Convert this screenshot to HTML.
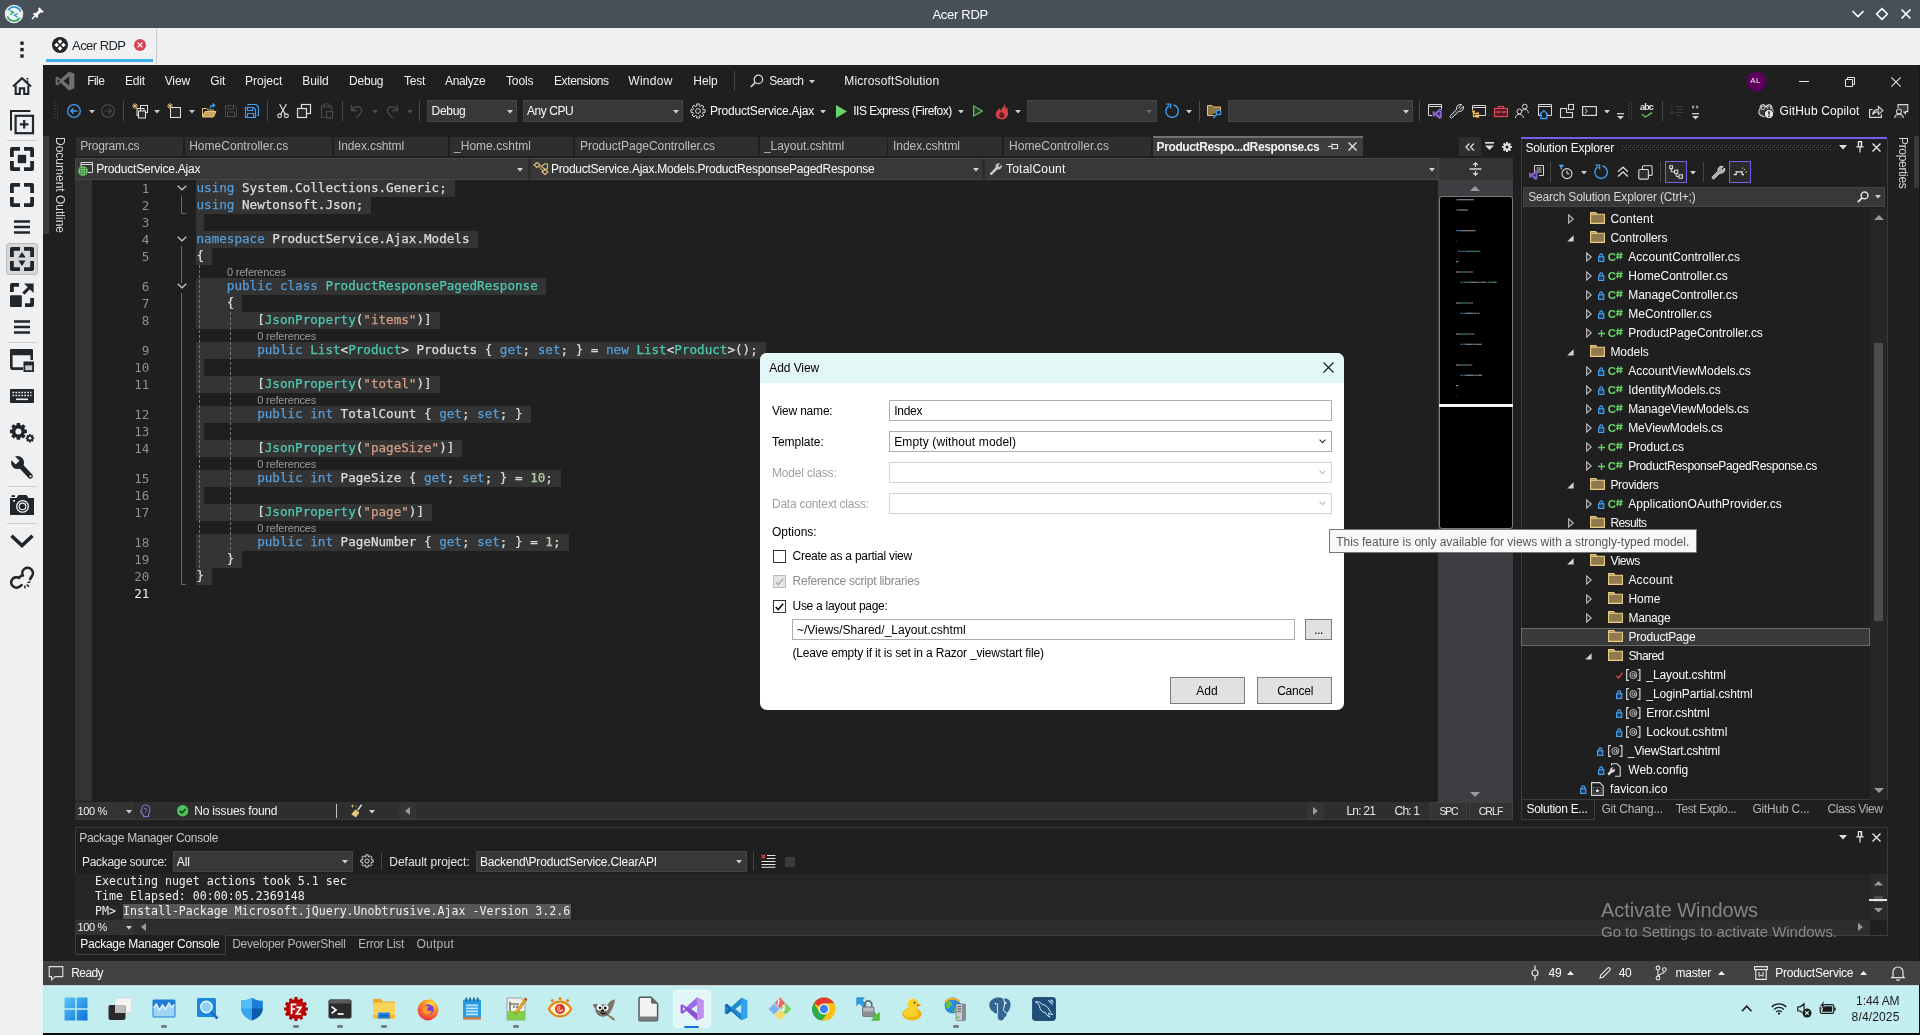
<!DOCTYPE html>
<html lang="en"><head><meta charset="utf-8"><title>Acer RDP</title>
<style>
html,body{margin:0;padding:0}
body{width:1920px;height:1035px;overflow:hidden;position:relative;background:#1f1f1f;font-family:"Liberation Sans",sans-serif;font-size:12px;color:#fff}
div,svg{box-sizing:border-box}
svg{overflow:visible}
#root{position:absolute;left:0;top:0;width:1920px;height:1035px;will-change:transform}
</style></head><body><div id="root">
<!-- p1_chrome -->
<div style="position:absolute;left:0px;top:0px;width:1920px;height:28px;background:#475059;"></div>
<div style="position:absolute;left:932.5px;top:5.5px;line-height:17px;font-size:13px;color:#fcfcfc;white-space:pre;letter-spacing:-0.299px;">Acer RDP</div>
<svg style="position:absolute;left:4px;top:4px;" width="20" height="20" viewBox="0 0 20 20"><circle cx="10" cy="10" r="9.3" fill="#e3e6e8"/><circle cx="10" cy="10" r="7.2" fill="#f4f5f6"/><path d="M4.2 6.2A7 7 0 0 1 16.6 7.6" fill="none" stroke="#2a8fd6" stroke-width="1.6"/><path d="M15.8 13.8A7 7 0 0 1 3.4 12.4" fill="none" stroke="#2fae62" stroke-width="1.6"/><path d="M6.2 6.6L9.6 8.6L6.2 10.6" fill="none" stroke="#2fae62" stroke-width="1.3"/><path d="M13.6 9.2L10.4 11.2L13.6 13.2" fill="none" stroke="#2a8fd6" stroke-width="1.3"/></svg>
<svg style="position:absolute;left:31px;top:6px;" width="14" height="14" viewBox="0 0 14 14"><path d="M8.2 1.2L12.8 5.8L11.6 6.6L9.6 6.4L6.9 9.1L7 11.2L5.9 12.1L1.9 8.1L2.8 7L4.9 7.1L7.6 4.4L7.4 2.4Z" fill="#fff"/><path d="M4 10L1 13" stroke="#fff" stroke-width="1.4"/></svg>
<svg style="position:absolute;left:1851px;top:9px;" width="14" height="10" viewBox="0 0 14 10"><path d="M1.5 2L7 7.5L12.5 2" fill="none" stroke="#fff" stroke-width="1.6"/></svg>
<svg style="position:absolute;left:1875px;top:7px;" width="14" height="14" viewBox="0 0 14 14"><path d="M7 1.6L12.4 7L7 12.4L1.6 7Z" fill="none" stroke="#fff" stroke-width="1.5"/></svg>
<svg style="position:absolute;left:1900px;top:8px;" width="12" height="12" viewBox="0 0 12 12"><path d="M1.5 1.5L10.5 10.5M10.5 1.5L1.5 10.5" stroke="#fff" stroke-width="1.6"/></svg>
<div style="position:absolute;left:0px;top:28px;width:1920px;height:37px;background:#eff0f1;"></div>
<div style="position:absolute;left:0px;top:28px;width:43px;height:1007px;background:#eff0f1;"></div>
<div style="position:absolute;left:46px;top:59px;width:107px;height:3px;background:#3daee9;"></div>
<div style="position:absolute;left:156px;top:29px;width:1px;height:35px;background:#c9cacc;"></div>
<svg style="position:absolute;left:52px;top:37px;" width="16" height="16" viewBox="0 0 16 16"><circle cx="8" cy="8" r="8" fill="#232629"/><path d="M8 2.3L10.3 4.6L8 6.9L5.7 4.6Z M8 9.1L10.3 11.4L8 13.7L5.7 11.4Z M4.6 5.7L6.9 8L4.6 10.3L2.3 8Z M11.4 5.7L13.7 8L11.4 10.3L9.1 8Z" fill="#fff"/></svg>
<div style="position:absolute;left:72.0px;top:36.5px;line-height:17px;font-size:13px;color:#232629;white-space:pre;letter-spacing:-0.536px;">Acer RDP</div>
<svg style="position:absolute;left:134px;top:39px;" width="12" height="12" viewBox="0 0 12 12"><circle cx="6" cy="6" r="6" fill="#da4453"/><path d="M3.6 3.6L8.4 8.4M8.4 3.6L3.6 8.4" stroke="#fff" stroke-width="1.3"/></svg>
<svg style="position:absolute;left:20px;top:41px;" width="4" height="17" viewBox="0 0 4 17"><rect x="0.3" y="0.5" width="3.4" height="3.4" fill="#232629"/><rect x="0.3" y="6.9" width="3.4" height="3.4" fill="#232629"/><rect x="0.3" y="13.3" width="3.4" height="3.4" fill="#232629"/></svg>
<svg style="position:absolute;left:12px;top:76px;" width="20" height="20" viewBox="0 0 20 20"><path d="M1 10.6L10 2.2L19 10.6" fill="none" stroke="#232629" stroke-width="2.1"/><path d="M3.7 9.4V18H7.8V12.4H12.2V18H16.3V9.4" fill="none" stroke="#232629" stroke-width="2.1"/><path d="M15.4 2V3.4M15.4 4.4V6.4" stroke="#232629" stroke-width="1.9"/></svg>
<svg style="position:absolute;left:10px;top:110px;" width="24" height="24" viewBox="0 0 24 24"><path d="M1 20.6V1H20.4" fill="none" stroke="#232629" stroke-width="2"/><rect x="5.6" y="5.8" width="17.4" height="17.4" fill="none" stroke="#232629" stroke-width="2.2"/><path d="M14.2 10V18.6M9.9 14.3H18.5" stroke="#232629" stroke-width="2.2"/></svg>
<div style="position:absolute;left:7px;top:140px;width:30px;height:1px;background:#cdcfd1;"></div>
<svg style="position:absolute;left:10px;top:147px;" width="24" height="24" viewBox="0 0 24 24"><path d="M1.9 10V1.9H10 M14 1.9H22.1V10 M22.1 14V22.1H14 M10 22.1H1.9V14" fill="none" stroke="#232629" stroke-width="3.8" stroke-linejoin="round"/><rect x="7.8" y="7.8" width="8.4" height="8.4" fill="#232629"/></svg>
<svg style="position:absolute;left:10px;top:183px;" width="24" height="24" viewBox="0 0 24 24"><path d="M1.9 10V1.9H10 M14 1.9H22.1V10 M22.1 14V22.1H14 M10 22.1H1.9V14" fill="none" stroke="#232629" stroke-width="3.8" stroke-linejoin="round"/></svg>
<svg style="position:absolute;left:14px;top:220px;" width="16" height="14" viewBox="0 0 16 14"><path d="M0 1.5H16M0 7H16M0 12.5H16" stroke="#232629" stroke-width="2.4"/></svg>
<div style="position:absolute;left:6px;top:243px;width:32px;height:32px;background:#d6d8da;border:1px solid #b9bbbd;box-sizing:border-box;border-radius:3px;"></div>
<svg style="position:absolute;left:10px;top:247px;" width="24" height="24" viewBox="0 0 24 24"><path d="M1.9 10V1.9H10 M14 1.9H22.1V10 M22.1 14V22.1H14 M10 22.1H1.9V14" fill="none" stroke="#232629" stroke-width="3.8" stroke-linejoin="round"/><path d="M12 5L15.6 10.4H8.4Z M12 19L15.6 13.6H8.4Z" fill="#232629"/></svg>
<svg style="position:absolute;left:10px;top:283px;" width="24" height="24" viewBox="0 0 24 24"><path d="M1.9 9V1.9H9 M22.1 15V22.1H15" fill="none" stroke="#232629" stroke-width="3.8" stroke-linejoin="round"/><rect x="0" y="12.2" width="11.8" height="11.8" rx="1" fill="#232629"/><path d="M13.4 10.6L20 4" stroke="#232629" stroke-width="3"/><path d="M14 0.4H23.6V10Z" fill="#232629"/></svg>
<svg style="position:absolute;left:14px;top:320px;" width="16" height="14" viewBox="0 0 16 14"><path d="M0 1.5H16M0 7H16M0 12.5H16" stroke="#232629" stroke-width="2.4"/></svg>
<div style="position:absolute;left:7px;top:342px;width:30px;height:1px;background:#cdcfd1;"></div>
<svg style="position:absolute;left:10px;top:349px;" width="24" height="24" viewBox="0 0 24 24"><path d="M13 19.6H2.6A1.3 1.3 0 0 1 1.3 18.3V2.6A1.3 1.3 0 0 1 2.6 1.3H20.4A1.3 1.3 0 0 1 21.7 2.6V11" fill="none" stroke="#232629" stroke-width="2.6"/><rect x="0" y="0" width="23" height="6.2" rx="1.3" fill="#232629"/><rect x="13.5" y="12.5" width="10.5" height="10.5" fill="#232629"/><rect x="15.2" y="16.4" width="7" height="4.8" fill="#c9cbcd"/></svg>
<svg style="position:absolute;left:10px;top:389px;" width="24" height="14" viewBox="0 0 24 14"><rect x="0" y="0" width="24" height="14" rx="1" fill="#232629"/><path d="M2.5 3.5H21.5M2.5 6.5H21.5" stroke="#eff0f1" stroke-width="1.6" stroke-dasharray="1.7 1.25"/><path d="M6 10.3H18" stroke="#eff0f1" stroke-width="1.6"/></svg>
<svg style="position:absolute;left:10px;top:420px;" width="24" height="24" viewBox="0 0 24 24"><circle cx="8.4" cy="11.4" r="6.6" fill="#232629"/><rect x="6.60" y="2.93" width="3.6" height="3.4" rx="0.5" transform="rotate(0.0 8.4 11.4)" fill="#232629"/><rect x="6.60" y="2.93" width="3.6" height="3.4" rx="0.5" transform="rotate(45.0 8.4 11.4)" fill="#232629"/><rect x="6.60" y="2.93" width="3.6" height="3.4" rx="0.5" transform="rotate(90.0 8.4 11.4)" fill="#232629"/><rect x="6.60" y="2.93" width="3.6" height="3.4" rx="0.5" transform="rotate(135.0 8.4 11.4)" fill="#232629"/><rect x="6.60" y="2.93" width="3.6" height="3.4" rx="0.5" transform="rotate(180.0 8.4 11.4)" fill="#232629"/><rect x="6.60" y="2.93" width="3.6" height="3.4" rx="0.5" transform="rotate(225.0 8.4 11.4)" fill="#232629"/><rect x="6.60" y="2.93" width="3.6" height="3.4" rx="0.5" transform="rotate(270.0 8.4 11.4)" fill="#232629"/><rect x="6.60" y="2.93" width="3.6" height="3.4" rx="0.5" transform="rotate(315.0 8.4 11.4)" fill="#232629"/><circle cx="8.4" cy="11.4" r="3.0" fill="#eff0f1"/><circle cx="20" cy="18.2" r="3.2" fill="#232629"/><rect x="19.05" y="13.96" width="1.9" height="1.9" rx="0.5" transform="rotate(0.0 20 18.2)" fill="#232629"/><rect x="19.05" y="13.96" width="1.9" height="1.9" rx="0.5" transform="rotate(45.0 20 18.2)" fill="#232629"/><rect x="19.05" y="13.96" width="1.9" height="1.9" rx="0.5" transform="rotate(90.0 20 18.2)" fill="#232629"/><rect x="19.05" y="13.96" width="1.9" height="1.9" rx="0.5" transform="rotate(135.0 20 18.2)" fill="#232629"/><rect x="19.05" y="13.96" width="1.9" height="1.9" rx="0.5" transform="rotate(180.0 20 18.2)" fill="#232629"/><rect x="19.05" y="13.96" width="1.9" height="1.9" rx="0.5" transform="rotate(225.0 20 18.2)" fill="#232629"/><rect x="19.05" y="13.96" width="1.9" height="1.9" rx="0.5" transform="rotate(270.0 20 18.2)" fill="#232629"/><rect x="19.05" y="13.96" width="1.9" height="1.9" rx="0.5" transform="rotate(315.0 20 18.2)" fill="#232629"/><circle cx="20" cy="18.2" r="1.4" fill="#eff0f1"/></svg>
<svg style="position:absolute;left:10px;top:456px;" width="24" height="24" viewBox="0 0 24 24"><path d="M8.5 7.5L20.4 20.2" stroke="#232629" stroke-width="5" stroke-linecap="round"/><circle cx="7.6" cy="6.6" r="6.5" fill="#232629"/><rect x="-2.6" y="-8" width="5.2" height="8.6" transform="translate(7.2 6.2) rotate(-45)" fill="#eff0f1"/><circle cx="20.5" cy="20.3" r="1.1" fill="#eff0f1"/></svg>
<div style="position:absolute;left:7px;top:486px;width:30px;height:1px;background:#cdcfd1;"></div>
<svg style="position:absolute;left:10px;top:494px;" width="24" height="22" viewBox="0 0 24 22"><path d="M0 4H6.5L8.5 1H16.5L18.5 4H24V21H0Z" fill="#232629"/><rect x="1.5" y="1.2" width="3.5" height="1.8" fill="#232629"/><circle cx="12.5" cy="12.4" r="5.8" fill="none" stroke="#eff0f1" stroke-width="1.3"/><circle cx="12.5" cy="12.4" r="3.3" fill="none" stroke="#eff0f1" stroke-width="1.2"/><rect x="3" y="6" width="2" height="1.6" fill="#eff0f1"/></svg>
<div style="position:absolute;left:7px;top:523px;width:30px;height:1px;background:#cdcfd1;"></div>
<svg style="position:absolute;left:10px;top:534px;" width="24" height="14" viewBox="0 0 24 14"><path d="M1.5 1.8L12 11.6L22.5 1.8" fill="none" stroke="#232629" stroke-width="3.6"/></svg>
<svg style="position:absolute;left:10px;top:566px;" width="24" height="24" viewBox="0 0 24 24"><path d="M12.9 9.6A5.3 5.3 0 1 1 21.6 10.6L20.2 13.2" fill="none" stroke="#232629" stroke-width="2.6" stroke-linecap="round"/><path d="M11 9.9L9 11.9A5.2 5.2 0 1 0 9.7 20.5L11.6 19.2" fill="none" stroke="#232629" stroke-width="2.6" stroke-linecap="round"/><path d="M17.4 16.6L20.4 15.8M16.6 18.6L19 20.6M14.6 19.6L15.2 22.4" stroke="#232629" stroke-width="1.5"/></svg>
<!-- p2_vstop -->
<div style="position:absolute;left:43px;top:65px;width:1877px;height:920px;background:#1f1f1f;"></div>
<svg style="position:absolute;left:55px;top:71px;" width="20" height="20" viewBox="0 0 20 20"><path d="M14 0.6L19.4 2.8V17.2L14 19.4L5.6 11.8L2.4 14.4L0.6 13.4V6.6L2.4 5.6L5.6 8.2Z M14.2 5.6L8.6 10L14.2 14.4Z M2.6 7.8V12.2L5 10Z" fill="#6f6f6f" fill-rule="evenodd"/></svg>
<div style="position:absolute;left:87.3px;top:73.0px;line-height:16px;color:#f0f0f0;white-space:pre;letter-spacing:-0.584px;">File</div>
<div style="position:absolute;left:125.0px;top:73.0px;line-height:16px;color:#f0f0f0;white-space:pre;letter-spacing:-0.169px;">Edit</div>
<div style="position:absolute;left:164.7px;top:73.0px;line-height:16px;color:#f0f0f0;white-space:pre;letter-spacing:-0.123px;">View</div>
<div style="position:absolute;left:210.3px;top:73.0px;line-height:16px;color:#f0f0f0;white-space:pre;letter-spacing:-0.111px;">Git</div>
<div style="position:absolute;left:245.0px;top:73.0px;line-height:16px;color:#f0f0f0;white-space:pre;letter-spacing:-0.007px;">Project</div>
<div style="position:absolute;left:302.3px;top:73.0px;line-height:16px;color:#f0f0f0;white-space:pre;letter-spacing:-0.057px;">Build</div>
<div style="position:absolute;left:349.0px;top:73.0px;line-height:16px;color:#f0f0f0;white-space:pre;letter-spacing:-0.212px;">Debug</div>
<div style="position:absolute;left:404.0px;top:73.0px;line-height:16px;color:#f0f0f0;white-space:pre;letter-spacing:-0.252px;">Test</div>
<div style="position:absolute;left:445.0px;top:73.0px;line-height:16px;color:#f0f0f0;white-space:pre;letter-spacing:-0.341px;">Analyze</div>
<div style="position:absolute;left:506.0px;top:73.0px;line-height:16px;color:#f0f0f0;white-space:pre;letter-spacing:-0.142px;">Tools</div>
<div style="position:absolute;left:554.0px;top:73.0px;line-height:16px;color:#f0f0f0;white-space:pre;letter-spacing:-0.400px;">Extensions</div>
<div style="position:absolute;left:628.3px;top:73.0px;line-height:16px;color:#f0f0f0;white-space:pre;letter-spacing:0.287px;">Window</div>
<div style="position:absolute;left:693.3px;top:73.0px;line-height:16px;color:#f0f0f0;white-space:pre;letter-spacing:-0.070px;">Help</div>
<div style="position:absolute;left:734px;top:71px;width:1px;height:20px;background:#474747;"></div>
<svg style="position:absolute;left:750px;top:74px;" width="14" height="14" viewBox="0 0 14 14"><circle cx="8.4" cy="5.4" r="4.2" fill="none" stroke="#d8d8d8" stroke-width="1.3"/><path d="M5.4 8.4L0.8 13" stroke="#d8d8d8" stroke-width="1.6"/></svg>
<div style="position:absolute;left:769.3px;top:73.0px;line-height:16px;color:#f0f0f0;white-space:pre;letter-spacing:-0.670px;">Search</div>
<svg style="position:absolute;left:808.7px;top:80.25px;" width="6" height="3.5" viewBox="0 0 6 3.5"><path d="M0 0H6L3.0 3.5Z" fill="#d0d0d0"/></svg>
<div style="position:absolute;left:844.3px;top:73.0px;line-height:16px;color:#f0f0f0;white-space:pre;letter-spacing:0.174px;">MicrosoftSolution</div>
<svg style="position:absolute;left:1745.5px;top:70.5px;" width="21" height="21" viewBox="0 0 21 21"><circle cx="10.5" cy="10.5" r="10" fill="#5c005c"/></svg>
<div style="position:absolute;left:1750.3px;top:75.3px;line-height:12px;font-size:8px;color:#f4e9f4;white-space:pre;letter-spacing:0.407px;">AL</div>
<div style="position:absolute;left:1799px;top:81px;width:10px;height:1px;background:#e6e6e6;"></div>
<svg style="position:absolute;left:1845px;top:77px;" width="10" height="10" viewBox="0 0 10 10"><path d="M0.5 2.5H7.5V9.5H0.5Z" fill="none" stroke="#e6e6e6"/><path d="M2.5 2.5V0.5H9.5V7.5H7.5" fill="none" stroke="#e6e6e6"/></svg>
<svg style="position:absolute;left:1891px;top:77px;" width="10" height="10" viewBox="0 0 10 10"><path d="M0.3 0.3L9.7 9.7M9.7 0.3L0.3 9.7" stroke="#e6e6e6" stroke-width="1.1"/></svg>
<svg style="position:absolute;left:54px;top:102px;" width="5" height="18" viewBox="0 0 5 18"><path d="M1 0V18M3.5 1.5V18" stroke="#555" stroke-width="1" stroke-dasharray="1 2"/></svg>
<svg style="position:absolute;left:66.0px;top:103.0px;" width="16" height="16" viewBox="0 0 16 16"><circle cx="8" cy="8" r="6.3" fill="none" stroke="#3f9cf0" stroke-width="1.3"/><path d="M11.5 8H5M7.6 5.2L4.8 8L7.6 10.8" fill="none" stroke="#3f9cf0" stroke-width="1.3"/></svg>
<svg style="position:absolute;left:88.7px;top:110.25px;" width="6" height="3.5" viewBox="0 0 6 3.5"><path d="M0 0H6L3.0 3.5Z" fill="#c8c8c8"/></svg>
<svg style="position:absolute;left:100.0px;top:103.0px;" width="16" height="16" viewBox="0 0 16 16"><circle cx="8" cy="8" r="6.3" fill="none" stroke="#4a4a4a" stroke-width="1.2"/><path d="M4.5 8H11M8.4 5.2L11.2 8L8.4 10.8" fill="none" stroke="#4a4a4a" stroke-width="1.2"/></svg>
<div style="position:absolute;left:123px;top:101px;width:1px;height:20px;background:#4a4a4a;"></div>
<svg style="position:absolute;left:132.0px;top:103.0px;" width="16" height="16" viewBox="0 0 16 16"><rect x="5" y="5.5" width="7" height="7" fill="#2a2a2a" stroke="#e0e0e0"/><rect x="8.5" y="2.5" width="7" height="7" fill="none" stroke="#e0e0e0"/><rect x="6.5" y="8" width="7" height="7" fill="#2a2a2a" stroke="#e0e0e0"/><path d="M3 0V6M0 3H6M0.9 0.9L5.1 5.1M5.1 0.9L0.9 5.1" stroke="#e8c37a" stroke-width="0.9"/></svg>
<svg style="position:absolute;left:153.7px;top:110.25px;" width="6" height="3.5" viewBox="0 0 6 3.5"><path d="M0 0H6L3.0 3.5Z" fill="#c8c8c8"/></svg>
<svg style="position:absolute;left:167.0px;top:103.0px;" width="16" height="16" viewBox="0 0 16 16"><rect x="3.5" y="4.5" width="10" height="10" fill="#2a2a2a" stroke="#e0e0e0"/><path d="M3 0V6M0 3H6M0.9 0.9L5.1 5.1M5.1 0.9L0.9 5.1" stroke="#e8c37a" stroke-width="0.9"/></svg>
<svg style="position:absolute;left:188.7px;top:110.25px;" width="6" height="3.5" viewBox="0 0 6 3.5"><path d="M0 0H6L3.0 3.5Z" fill="#c8c8c8"/></svg>
<svg style="position:absolute;left:201.0px;top:103.0px;" width="16" height="16" viewBox="0 0 16 16"><path d="M1.5 14V5.5H5.5L7 7H12.5V8.5" fill="none" stroke="#e8c37a"/><path d="M1.5 14L4 8.5H15L12.5 14Z" fill="#c9a85f" stroke="#e8c37a"/><path d="M9 5.5C9 3 11 2 13.5 2.2M11.5 0.4L13.8 2.2L11.5 4.2" fill="none" stroke="#3f9cf0" stroke-width="1.2"/></svg>
<svg style="position:absolute;left:222.7px;top:103.0px;" width="16" height="16" viewBox="0 0 16 16"><path d="M2.5 2.5H11.5L13.5 4.5V13.5H2.5Z" fill="none" stroke="#4a4a4a"/><path d="M5 2.5V6H10.5V2.5M4.5 13.5V9H11.5V13.5" fill="none" stroke="#4a4a4a"/></svg>
<svg style="position:absolute;left:244.3px;top:103.0px;" width="16" height="16" viewBox="0 0 16 16"><path d="M1.5 4.5H9.5L11.5 6.5V14.5H1.5Z" fill="none" stroke="#3f9cf0" stroke-width="1.2"/><path d="M3.5 4.5V7.5H8.5V4.5M3.5 14.5V10.5H9.5V14.5" fill="none" stroke="#3f9cf0" stroke-width="1.1"/><path d="M4 2.5V1.5H12L14.5 4V12.5H13" fill="none" stroke="#3f9cf0" stroke-width="1.2"/></svg>
<div style="position:absolute;left:267px;top:101px;width:1px;height:20px;background:#4a4a4a;"></div>
<svg style="position:absolute;left:274.7px;top:103.0px;" width="16" height="16" viewBox="0 0 16 16"><path d="M4.6 1L10.2 11.2M11.4 1L5.8 11.2" stroke="#e0e0e0" stroke-width="1.2"/><circle cx="4.6" cy="12.8" r="1.9" fill="none" stroke="#e0e0e0" stroke-width="1.1"/><circle cx="11.4" cy="12.8" r="1.9" fill="none" stroke="#e0e0e0" stroke-width="1.1"/></svg>
<svg style="position:absolute;left:296.3px;top:103.0px;" width="16" height="16" viewBox="0 0 16 16"><rect x="5.5" y="1.5" width="9" height="9" fill="none" stroke="#e0e0e0" stroke-width="1.2"/><rect x="1.5" y="5.5" width="9" height="9" fill="#2a2a2a" stroke="#e0e0e0" stroke-width="1.2"/></svg>
<svg style="position:absolute;left:318.7px;top:103.0px;" width="16" height="16" viewBox="0 0 16 16"><path d="M6 3H2.5V14.5H6.5M10 3H12.5V7" fill="none" stroke="#4a4a4a" stroke-width="1.2"/><rect x="5" y="1" width="5" height="3" fill="none" stroke="#4a4a4a"/><rect x="7.5" y="8.5" width="6" height="6.5" fill="none" stroke="#4a4a4a" stroke-width="1.2"/></svg>
<div style="position:absolute;left:341.5px;top:101px;width:1px;height:20px;background:#4a4a4a;"></div>
<svg style="position:absolute;left:349.3px;top:103.0px;" width="16" height="16" viewBox="0 0 16 16"><path d="M2.5 2V7.5H8M2.8 7.2C5 3 11 2.5 12.5 6.5C13.5 9.5 10 12.5 7 15" fill="none" stroke="#4a4a4a" stroke-width="1.3"/></svg>
<svg style="position:absolute;left:372.0px;top:110.25px;" width="6" height="3.5" viewBox="0 0 6 3.5"><path d="M0 0H6L3.0 3.5Z" fill="#4f4f4f"/></svg>
<svg style="position:absolute;left:384.3px;top:103.0px;" width="16" height="16" viewBox="0 0 16 16"><path d="M13.5 2V7.5H8M13.2 7.2C11 3 5 2.5 3.5 6.5C2.5 9.5 6 12.5 9 15" fill="none" stroke="#4a4a4a" stroke-width="1.3"/></svg>
<svg style="position:absolute;left:407.0px;top:110.25px;" width="6" height="3.5" viewBox="0 0 6 3.5"><path d="M0 0H6L3.0 3.5Z" fill="#4f4f4f"/></svg>
<div style="position:absolute;left:419px;top:101px;width:1px;height:20px;background:#4a4a4a;"></div>
<div style="position:absolute;left:427px;top:100px;width:90px;height:22px;background:#383838;border:1px solid #454545;box-sizing:border-box;"></div>
<div style="position:absolute;left:431.5px;top:103.0px;line-height:16px;color:#fafafa;white-space:pre;letter-spacing:-0.272px;">Debug</div>
<svg style="position:absolute;left:506.7px;top:109.75px;" width="6" height="3.5" viewBox="0 0 6 3.5"><path d="M0 0H6L3.0 3.5Z" fill="#d0d0d0"/></svg>
<div style="position:absolute;left:523px;top:100px;width:160px;height:22px;background:#383838;border:1px solid #454545;box-sizing:border-box;"></div>
<div style="position:absolute;left:527.0px;top:103.0px;line-height:16px;color:#fafafa;white-space:pre;letter-spacing:-0.435px;">Any CPU</div>
<svg style="position:absolute;left:672.7px;top:109.75px;" width="6" height="3.5" viewBox="0 0 6 3.5"><path d="M0 0H6L3.0 3.5Z" fill="#d0d0d0"/></svg>
<svg style="position:absolute;left:689.5px;top:103.0px;" width="16" height="16" viewBox="0 0 16 16"><path d="M15.06 6.57L15.06 9.43L13.06 9.20L12.43 10.73L14.00 11.98L11.98 14.00L10.73 12.43L9.20 13.06L9.43 15.06L6.57 15.06L6.80 13.06L5.27 12.43L4.02 14.00L2.00 11.98L3.57 10.73L2.94 9.20L0.94 9.43L0.94 6.57L2.94 6.80L3.57 5.27L2.00 4.02L4.02 2.00L5.27 3.57L6.80 2.94L6.57 0.94L9.43 0.94L9.20 2.94L10.73 3.57L11.98 2.00L14.00 4.02L12.43 5.27L13.06 6.80Z" fill="none" stroke="#d8d8d8" stroke-width="1"/><circle cx="8" cy="8" r="2.4" fill="none" stroke="#d8d8d8"/></svg>
<div style="position:absolute;left:710.0px;top:103.0px;line-height:16px;color:#fafafa;white-space:pre;letter-spacing:-0.213px;">ProductService.Ajax</div>
<svg style="position:absolute;left:820.0px;top:110.25px;" width="6" height="3.5" viewBox="0 0 6 3.5"><path d="M0 0H6L3.0 3.5Z" fill="#d0d0d0"/></svg>
<svg style="position:absolute;left:836px;top:104.5px;" width="11" height="13" viewBox="0 0 11 13"><path d="M0 0V13L11 6.5Z" fill="#6bd36b"/></svg>
<div style="position:absolute;left:853.3px;top:103.0px;line-height:16px;color:#fafafa;white-space:pre;letter-spacing:-0.521px;">IIS Express (Firefox)</div>
<svg style="position:absolute;left:957.7px;top:110.25px;" width="6" height="3.5" viewBox="0 0 6 3.5"><path d="M0 0H6L3.0 3.5Z" fill="#d0d0d0"/></svg>
<svg style="position:absolute;left:973px;top:105px;" width="10" height="12" viewBox="0 0 10 12"><path d="M0.7 0.9V11.1L9.3 6Z" fill="#2c3a2c" stroke="#6bd36b" stroke-width="1.1"/></svg>
<svg style="position:absolute;left:994.5px;top:102.5px;" width="15" height="17" viewBox="0 0 15 17"><path d="M9.5 0.5C10 3.5 6.8 4.5 6.2 7.5C5 6.8 5 5.2 5 5.2C2.2 7 0.6 9.4 0.8 11.8C1 14.6 3.6 16.4 6.6 16.4C10.6 16.4 13.4 13.6 13 10C12.8 8.2 12.2 7 12.8 4.6C11 5.2 10.4 6.6 10.4 6.6C10.6 4 10.6 1.8 9.5 0.5Z" fill="#d9434e"/><path d="M6.8 8.5C4.8 9.8 3.8 11.4 4.2 13C4.6 14.6 6 15.2 7.2 15C9 14.8 10 13.2 9.6 11.6C9.2 10.4 7.4 10 6.8 8.5Z" fill="#6e1a22"/></svg>
<svg style="position:absolute;left:1014.7px;top:110.25px;" width="6" height="3.5" viewBox="0 0 6 3.5"><path d="M0 0H6L3.0 3.5Z" fill="#d0d0d0"/></svg>
<div style="position:absolute;left:1027px;top:100px;width:130px;height:22px;background:#383838;border:1px solid #454545;box-sizing:border-box;"></div>
<svg style="position:absolute;left:1146.3px;top:109.75px;" width="6" height="3.5" viewBox="0 0 6 3.5"><path d="M0 0H6L3.0 3.5Z" fill="#6a6a6a"/></svg>
<svg style="position:absolute;left:1163.7px;top:103.0px;" width="16" height="16" viewBox="0 0 16 16"><path d="M5.2 2.6A6.3 6.3 0 1 0 9.5 2" fill="none" stroke="#3f9cf0" stroke-width="1.4"/><path d="M2.2 1.2H6.6V5.6" fill="none" stroke="#3f9cf0" stroke-width="1.3"/></svg>
<svg style="position:absolute;left:1186.0px;top:110.25px;" width="6" height="3.5" viewBox="0 0 6 3.5"><path d="M0 0H6L3.0 3.5Z" fill="#d0d0d0"/></svg>
<div style="position:absolute;left:1198.5px;top:101px;width:1px;height:20px;background:#4a4a4a;"></div>
<svg style="position:absolute;left:1206.0px;top:103.0px;" width="16" height="16" viewBox="0 0 16 16"><path d="M1.5 12.5V2.5H6L7.5 4H14.5V9" fill="#8a7440" stroke="#e8c37a"/><path d="M1.5 12.5H8" stroke="#e8c37a"/><circle cx="12.6" cy="9.4" r="2.3" fill="#1f1f1f" stroke="#3f9cf0" stroke-width="1.2"/><path d="M10.8 11.2L7.5 15" stroke="#3f9cf0" stroke-width="1.3"/></svg>
<div style="position:absolute;left:1228px;top:100px;width:185px;height:22px;background:#383838;border:1px solid #454545;box-sizing:border-box;"></div>
<svg style="position:absolute;left:1403.0px;top:109.75px;" width="6" height="3.5" viewBox="0 0 6 3.5"><path d="M0 0H6L3.0 3.5Z" fill="#d0d0d0"/></svg>
<div style="position:absolute;left:1419px;top:101px;width:1px;height:20px;background:#4a4a4a;"></div>
<svg style="position:absolute;left:1427.0px;top:103.0px;" width="16" height="16" viewBox="0 0 16 16"><path d="M1.5 12.5V1.5H14.5V6" fill="none" stroke="#d8d8d8"/><path d="M1.5 3.5H14.5" stroke="#d8d8d8"/><path d="M1.5 12.5H5" stroke="#d8d8d8"/><path d="M14.8 6.4V15L12.4 16L8.4 12.4L6.6 13.8L5.6 13.3V8.5L6.6 8L8.4 9.4L12.4 5.6Z M12.6 8.8L10.2 10.8L12.6 12.8Z" fill="#8661c5" fill-rule="evenodd"/></svg>
<svg style="position:absolute;left:1448.7px;top:103.0px;" width="16" height="16" viewBox="0 0 16 16"><path d="M14.4 3.2L11.8 5.8L10.2 4.2L12.8 1.6A4 4 0 0 0 7.6 6.4L1.4 12.6A1.4 1.4 0 0 0 3.4 14.6L9.6 8.4A4 4 0 0 0 14.4 3.2Z" fill="#3a3a3a" stroke="#d8d8d8" stroke-width="1"/></svg>
<svg style="position:absolute;left:1470.7px;top:103.0px;" width="16" height="16" viewBox="0 0 16 16"><path d="M4 12.5H14.5V2.5H1.5V7" fill="none" stroke="#d8d8d8"/><path d="M1.5 4.5H14.5" stroke="#d8d8d8"/><path d="M2.5 8V13.5H6.5M2.5 10.5H6.5" fill="none" stroke="#e8b84a" stroke-width="1.3"/><rect x="1" y="7.5" width="3" height="2" fill="#e8b84a"/><rect x="5.5" y="9.4" width="2.6" height="2.2" fill="#e8b84a"/><rect x="5.5" y="12.6" width="2.6" height="2.2" fill="#e8b84a"/></svg>
<svg style="position:absolute;left:1492.7px;top:103.0px;" width="16" height="16" viewBox="0 0 16 16"><rect x="1.5" y="5.5" width="13" height="8" fill="#4a1a20" stroke="#e5485a" stroke-width="1.2"/><path d="M5.5 5.5V3.5H10.5V5.5" fill="none" stroke="#e5485a" stroke-width="1.2"/><path d="M1.5 9H14.5" stroke="#e5485a"/><path d="M5 8V10.5M11 8V10.5" stroke="#e5485a" stroke-width="1.2"/></svg>
<svg style="position:absolute;left:1514.3px;top:103.0px;" width="16" height="16" viewBox="0 0 16 16"><circle cx="10.8" cy="3.6" r="2.4" fill="none" stroke="#d8d8d8"/><path d="M7.4 9.5C7.6 7.4 9 6.4 10.8 6.4C12.8 6.4 14.2 7.6 14.4 10" fill="none" stroke="#d8d8d8"/><circle cx="5.4" cy="8.4" r="2.4" fill="#1f1f1f" stroke="#d8d8d8"/><path d="M1.4 15C1.6 12.6 3.2 11.4 5.4 11.4C7.6 11.4 9.2 12.6 9.4 15" fill="none" stroke="#d8d8d8"/></svg>
<svg style="position:absolute;left:1537.0px;top:103.0px;" width="16" height="16" viewBox="0 0 16 16"><path d="M5 12.5H1.5V1.5H14.5V12.5H10" fill="none" stroke="#d8d8d8"/><path d="M1.5 3.5H14.5" stroke="#d8d8d8"/><path d="M2.6 11.4L6.8 7.6L11 11.4M3.8 10.6V15.5H9.8V10.6" fill="none" stroke="#3f9cf0" stroke-width="1.3"/></svg>
<svg style="position:absolute;left:1558.7px;top:103.0px;" width="16" height="16" viewBox="0 0 16 16"><path d="M1.5 5.5H7.5V9.5H13.5V14.5H1.5Z" fill="none" stroke="#d8d8d8" stroke-width="1.1"/><rect x="9.5" y="1.5" width="5" height="5" fill="none" stroke="#d8d8d8" stroke-width="1.1"/></svg>
<svg style="position:absolute;left:1582px;top:106px;" width="15" height="10" viewBox="0 0 15 10"><rect x="0.6" y="0.6" width="13.8" height="8.8" fill="none" stroke="#d8d8d8" stroke-width="1.2"/><path d="M3 2.8L5.4 5L3 7.2" fill="none" stroke="#d8d8d8" stroke-width="1"/></svg>
<svg style="position:absolute;left:1603.7px;top:110.25px;" width="6" height="3.5" viewBox="0 0 6 3.5"><path d="M0 0H6L3.0 3.5Z" fill="#d0d0d0"/></svg>
<svg style="position:absolute;left:1616.5px;top:113px;" width="7" height="7" viewBox="0 0 7 7"><path d="M0 0.7H7" stroke="#d0d0d0" stroke-width="1.3"/><path d="M0 3H7L3.5 6.5Z" fill="#d0d0d0"/></svg>
<svg style="position:absolute;left:1628px;top:102px;" width="5" height="18" viewBox="0 0 5 18"><path d="M1 0V18M3.5 1.5V18" stroke="#555" stroke-width="1" stroke-dasharray="1 2"/></svg>
<div style="position:absolute;left:1640.0px;top:101.3px;line-height:13px;font-size:9px;font-weight:bold;color:#e8e8e8;white-space:pre;letter-spacing:-0.836px;">abc</div>
<svg style="position:absolute;left:1641px;top:112px;" width="12" height="6" viewBox="0 0 12 6"><path d="M1 2.2L4.4 5L11 0.6" fill="none" stroke="#5bc85b" stroke-width="1.4"/></svg>
<div style="position:absolute;left:1661.5px;top:101px;width:1px;height:20px;background:#4a4a4a;"></div>
<svg style="position:absolute;left:1668.7px;top:103.0px;" width="16" height="16" viewBox="0 0 16 16"><path d="M6 3.5H14M8 6.5H14M6 9.5H14M8 12.5H12" stroke="#3e3e3e" stroke-width="1"/><path d="M3 3V11M1 9L3 11.5L5 9" fill="none" stroke="#3e3e3e"/></svg>
<svg style="position:absolute;left:1691.5px;top:105px;" width="8" height="4" viewBox="0 0 8 4"><path d="M0.5 0V4L2.5 2ZM4.5 0V4L6.5 2Z" fill="#d0d0d0"/></svg>
<svg style="position:absolute;left:1691.5px;top:113px;" width="7" height="7" viewBox="0 0 7 7"><path d="M0 0.7H7" stroke="#d0d0d0" stroke-width="1.3"/><path d="M0 3H7L3.5 6.5Z" fill="#d0d0d0"/></svg>
<svg style="position:absolute;left:1758px;top:104px;" width="16" height="15" viewBox="0 0 16 15"><path d="M4.6 0.8C6.6 0.6 7.4 1.6 7.6 3H8.4C8.6 1.6 9.4 0.6 11.4 0.8C13.6 1 14 2.6 13.8 4.6C15 5.6 15.4 7 15.2 9C14 11.6 11 12.8 8 12.8C5 12.8 2 11.6 0.8 9C0.6 7 1 5.6 2.2 4.6C2 2.6 2.4 1 4.6 0.8Z" fill="#3a3a3a" stroke="#e0e0e0" stroke-width="1.1"/><path d="M3.6 2.2H6.2V5.4H3.6ZM9.8 2.2H12.4V5.4H9.8Z" fill="#1f1f1f" stroke="#e0e0e0" stroke-width="0.8"/><circle cx="11" cy="10" r="4.6" fill="#e8e8e8" stroke="#1f1f1f"/><path d="M11 7.2V10.4M11 11.6V13" stroke="#1f1f1f" stroke-width="1.5"/></svg>
<div style="position:absolute;left:1779.6px;top:103.0px;line-height:16px;color:#fafafa;white-space:pre;letter-spacing:0.126px;">GitHub Copilot</div>
<svg style="position:absolute;left:1868.5px;top:105px;" width="15" height="13" viewBox="0 0 15 13"><path d="M3.6 4.5H0.6V12.4H12.4V9.6" fill="none" stroke="#d8d8d8" stroke-width="1.2"/><path d="M3.6 9.6C4 6.4 6.4 4.6 9.4 4.6V1.4L14 5.6L9.4 9.6V6.8C7 6.8 5 7.4 3.6 9.6Z" fill="#3a3a3a" stroke="#d8d8d8" stroke-width="1.1"/></svg>
<svg style="position:absolute;left:1894px;top:104px;" width="15" height="14" viewBox="0 0 15 14"><path d="M4 4V0.6H13.8V7.6H11.4L11.4 9.6L9.4 7.6" fill="#3a3a3a" stroke="#d8d8d8" stroke-width="1.1"/><circle cx="5" cy="7.4" r="2.4" fill="#1f1f1f" stroke="#d8d8d8" stroke-width="1.1"/><path d="M0.6 14C0.8 11.4 2.6 10.2 5 10.2C7.4 10.2 9.2 11.4 9.4 14" fill="#3a3a3a" stroke="#d8d8d8" stroke-width="1.1"/></svg>
<!-- p3_editor -->
<div style="position:absolute;left:43px;top:136px;width:6px;height:98px;background:#3a3a3a;"></div>
<div style="position:absolute;left:68px;top:137px;transform-origin:0 0;transform:rotate(90deg);white-space:pre;line-height:16px;color:#d6d6d6;letter-spacing:-0.003px">Document Outline</div>
<div style="position:absolute;left:76px;top:137px;width:107px;height:19px;background:#2e2e2e;"></div>
<div style="position:absolute;left:80.3px;top:138.0px;line-height:16px;color:#bdbdbd;white-space:pre;letter-spacing:-0.234px;">Program.cs</div>
<div style="position:absolute;left:185px;top:137px;width:147px;height:19px;background:#2e2e2e;"></div>
<div style="position:absolute;left:189.2px;top:138.0px;line-height:16px;color:#bdbdbd;white-space:pre;letter-spacing:0.018px;">HomeController.cs</div>
<div style="position:absolute;left:334px;top:137px;width:114px;height:19px;background:#2e2e2e;"></div>
<div style="position:absolute;left:338.0px;top:138.0px;line-height:16px;color:#bdbdbd;white-space:pre;letter-spacing:-0.113px;">Index.cshtml</div>
<div style="position:absolute;left:450px;top:137px;width:123px;height:19px;background:#2e2e2e;"></div>
<div style="position:absolute;left:454.0px;top:138.0px;line-height:16px;color:#bdbdbd;white-space:pre;letter-spacing:0.026px;">_Home.cshtml</div>
<div style="position:absolute;left:575px;top:137px;width:183px;height:19px;background:#2e2e2e;"></div>
<div style="position:absolute;left:580.0px;top:138.0px;line-height:16px;color:#bdbdbd;white-space:pre;letter-spacing:-0.044px;">ProductPageController.cs</div>
<div style="position:absolute;left:760px;top:137px;width:127px;height:19px;background:#2e2e2e;"></div>
<div style="position:absolute;left:764.0px;top:138.0px;line-height:16px;color:#bdbdbd;white-space:pre;letter-spacing:-0.050px;">_Layout.cshtml</div>
<div style="position:absolute;left:888px;top:137px;width:114px;height:19px;background:#2e2e2e;"></div>
<div style="position:absolute;left:893.0px;top:138.0px;line-height:16px;color:#bdbdbd;white-space:pre;letter-spacing:-0.030px;">Index.cshtml</div>
<div style="position:absolute;left:1004px;top:137px;width:147px;height:19px;background:#2e2e2e;"></div>
<div style="position:absolute;left:1009.0px;top:138.0px;line-height:16px;color:#bdbdbd;white-space:pre;letter-spacing:0.077px;">HomeController.cs</div>
<div style="position:absolute;left:1153px;top:136px;width:210px;height:20px;background:#3d3d3d;border-top:2px solid #727272;"></div>
<div style="position:absolute;left:1156.6px;top:138.5px;line-height:16px;font-weight:bold;color:#f2f2f2;white-space:pre;letter-spacing:-0.395px;">ProductRespo...dResponse.cs</div>
<svg style="position:absolute;left:1328px;top:142px;" width="11" height="9" viewBox="0 0 11 9"><path d="M0 4.5H4M4 1.5V7.5M4 2.5H9.5V6.5H4" fill="none" stroke="#e6e6e6" stroke-width="1.1"/></svg>
<svg style="position:absolute;left:1348px;top:142px;" width="9" height="9" viewBox="0 0 9 9"><path d="M0.5 0.5L8.5 8.5M8.5 0.5L0.5 8.5" stroke="#e6e6e6" stroke-width="1.3"/></svg>
<div style="position:absolute;left:1459px;top:137px;width:22px;height:19px;background:#2e2e2e;"></div>
<svg style="position:absolute;left:1465px;top:143px;" width="10" height="8" viewBox="0 0 10 8"><path d="M4.5 0.5L1 4L4.5 7.5M9 0.5L5.5 4L9 7.5" fill="none" stroke="#e0e0e0" stroke-width="1.3"/></svg>
<svg style="position:absolute;left:1484.5px;top:142px;" width="9" height="8" viewBox="0 0 9 8"><path d="M0 0.8H9" stroke="#e0e0e0" stroke-width="1.6"/><path d="M0 3.5H9L4.5 8Z" fill="#e0e0e0"/></svg>
<svg style="position:absolute;left:1502.2px;top:141.5px;" width="10" height="10" viewBox="0 0 10 10"><path d="M9.90 4.01L9.90 5.99L8.47 5.97L8.14 6.77L9.17 7.76L7.76 9.17L6.77 8.14L5.97 8.47L5.99 9.90L4.01 9.90L4.03 8.47L3.23 8.14L2.24 9.17L0.83 7.76L1.86 6.77L1.53 5.97L0.10 5.99L0.10 4.01L1.53 4.03L1.86 3.23L0.83 2.24L2.24 0.83L3.23 1.86L4.03 1.53L4.01 0.10L5.99 0.10L5.97 1.53L6.77 1.86L7.76 0.83L9.17 2.24L8.14 3.23L8.47 4.03Z" fill="#e0e0e0"/><circle cx="5" cy="5" r="1.5" fill="#1f1f1f"/></svg>
<div style="position:absolute;left:75px;top:158px;width:1364px;height:22px;background:#383838;border:1px solid #464646;box-sizing:border-box;"></div>
<div style="position:absolute;left:528px;top:159px;width:3px;height:20px;background:#2b2b2b;"></div>
<div style="position:absolute;left:982px;top:159px;width:3px;height:20px;background:#2b2b2b;"></div>
<svg style="position:absolute;left:78px;top:161px;" width="16" height="15" viewBox="0 0 16 15"><path d="M3 11.5V1.5H14.5V11.5H10" fill="none" stroke="#d8d8d8"/><path d="M3 3.5H14.5" stroke="#d8d8d8"/><circle cx="5" cy="10" r="4.8" fill="#7fdc7f"/><path d="M0.4 10H9.6M5 5.2V14.8M1.2 7.6H8.8M1.2 12.4H8.8M3 5.8C2.2 8.6 2.2 11.4 3 14.2M7 5.8C7.8 8.6 7.8 11.4 7 14.2" fill="none" stroke="#2a6a2a" stroke-width="0.6"/></svg>
<div style="position:absolute;left:96.3px;top:160.8px;line-height:16px;color:#fafafa;white-space:pre;letter-spacing:-0.213px;">ProductService.Ajax</div>
<svg style="position:absolute;left:517.0px;top:168.25px;" width="6" height="3.5" viewBox="0 0 6 3.5"><path d="M0 0H6L3.0 3.5Z" fill="#d0d0d0"/></svg>
<svg style="position:absolute;left:533px;top:161px;" width="16" height="15" viewBox="0 0 16 15"><path d="M1 4L4 1.5L7 4L4 6.5Z M8.5 5.5L11.5 3H14.5V8H11.5Z M9 11L12 8.5L15 11L12 13.5Z" fill="none" stroke="#e8c37a" stroke-width="1.1"/><path d="M6.5 4.5L9 5.5M6 5.5L10 10" stroke="#e8c37a" stroke-width="1"/></svg>
<div style="position:absolute;left:551.0px;top:160.8px;line-height:16px;color:#fafafa;white-space:pre;letter-spacing:-0.255px;">ProductService.Ajax.Models.ProductResponsePagedResponse</div>
<svg style="position:absolute;left:972.5px;top:168.25px;" width="6" height="3.5" viewBox="0 0 6 3.5"><path d="M0 0H6L3.0 3.5Z" fill="#d0d0d0"/></svg>
<svg style="position:absolute;left:989px;top:162px;" width="14" height="14" viewBox="0 0 14 14"><path d="M12.6 2.8L10.3 5.1L8.9 3.7L11.2 1.4A3.5 3.5 0 0 0 6.6 5.6L1.2 11A1.3 1.3 0 0 0 3 12.8L8.4 7.4A3.5 3.5 0 0 0 12.6 2.8Z" fill="#c8c8c8"/></svg>
<div style="position:absolute;left:1006.0px;top:160.8px;line-height:16px;color:#fafafa;white-space:pre;letter-spacing:0.213px;">TotalCount</div>
<svg style="position:absolute;left:1428.8px;top:168.25px;" width="6" height="3.5" viewBox="0 0 6 3.5"><path d="M0 0H6L3.0 3.5Z" fill="#d0d0d0"/></svg>
<div style="position:absolute;left:1439px;top:158px;width:74px;height:22px;background:#333333;"></div>
<svg style="position:absolute;left:1468.5px;top:162px;" width="13" height="14" viewBox="0 0 13 14"><path d="M0.5 7H12.5" stroke="#e0e0e0" stroke-width="1.4"/><path d="M6.5 0.8V5M6.5 9V13.2M4.2 3L6.5 0.8L8.8 3M4.2 11L6.5 13.2L8.8 11" fill="none" stroke="#e0e0e0" stroke-width="1.1"/></svg>
<div style="position:absolute;left:75px;top:180px;width:17px;height:621px;background:#333333;"></div>
<div style="position:absolute;right:1770.7px;top:179.7px;line-height:17px;font-size:12.6px;font-family:'DejaVu Sans Mono','Liberation Mono',monospace;color:#8f8f8f;white-space:pre;">1</div>
<div style="position:absolute;left:195.8px;top:180.0px;width:259.1px;height:17px;background:#343434;"></div>
<div style="position:absolute;left:196.5px;top:179.0px;line-height:17px;height:17px;font:12.6px/17px 'DejaVu Sans Mono','Liberation Mono',monospace;color:#dcdcdc;white-space:pre;-webkit-text-stroke:0.25px"><span style="color:#569cd6">using</span> System.Collections.Generic;</div>
<div style="position:absolute;right:1770.7px;top:196.7px;line-height:17px;font-size:12.6px;font-family:'DejaVu Sans Mono','Liberation Mono',monospace;color:#8f8f8f;white-space:pre;">2</div>
<div style="position:absolute;left:195.8px;top:197.0px;width:175.5px;height:17px;background:#343434;"></div>
<div style="position:absolute;left:196.5px;top:196.0px;line-height:17px;height:17px;font:12.6px/17px 'DejaVu Sans Mono','Liberation Mono',monospace;color:#dcdcdc;white-space:pre;-webkit-text-stroke:0.25px"><span style="color:#569cd6">using</span> Newtonsoft.Json;</div>
<div style="position:absolute;right:1770.7px;top:213.7px;line-height:17px;font-size:12.6px;font-family:'DejaVu Sans Mono','Liberation Mono',monospace;color:#8f8f8f;white-space:pre;">3</div>
<div style="position:absolute;left:195.8px;top:214.0px;width:8.3px;height:17px;background:#343434;"></div>
<div style="position:absolute;right:1770.7px;top:230.7px;line-height:17px;font-size:12.6px;font-family:'DejaVu Sans Mono','Liberation Mono',monospace;color:#8f8f8f;white-space:pre;">4</div>
<div style="position:absolute;left:195.8px;top:231.0px;width:281.9px;height:17px;background:#343434;"></div>
<div style="position:absolute;left:196.5px;top:230.0px;line-height:17px;height:17px;font:12.6px/17px 'DejaVu Sans Mono','Liberation Mono',monospace;color:#dcdcdc;white-space:pre;-webkit-text-stroke:0.25px"><span style="color:#569cd6">namespace</span> ProductService.Ajax.Models</div>
<div style="position:absolute;right:1770.7px;top:247.7px;line-height:17px;font-size:12.6px;font-family:'DejaVu Sans Mono','Liberation Mono',monospace;color:#8f8f8f;white-space:pre;">5</div>
<div style="position:absolute;left:195.8px;top:248.0px;width:15.9px;height:17px;background:#343434;"></div>
<div style="position:absolute;left:196.5px;top:247.0px;line-height:17px;height:17px;font:12.6px/17px 'DejaVu Sans Mono','Liberation Mono',monospace;color:#dcdcdc;white-space:pre;-webkit-text-stroke:0.25px">{</div>
<div style="position:absolute;left:226.9px;top:265.7px;line-height:13px;font-size:11px;color:#9a9a9a;white-space:pre;letter-spacing:-0.195px;">0 references</div>
<div style="position:absolute;right:1770.7px;top:277.7px;line-height:17px;font-size:12.6px;font-family:'DejaVu Sans Mono','Liberation Mono',monospace;color:#8f8f8f;white-space:pre;">6</div>
<div style="position:absolute;left:195.8px;top:278.0px;width:350.3px;height:17px;background:#343434;"></div>
<div style="position:absolute;left:196.5px;top:277.0px;line-height:17px;height:17px;font:12.6px/17px 'DejaVu Sans Mono','Liberation Mono',monospace;color:#dcdcdc;white-space:pre;-webkit-text-stroke:0.25px">    <span style="color:#569cd6">public</span> <span style="color:#569cd6">class</span> <span style="color:#4ec9b0">ProductResponsePagedResponse</span></div>
<div style="position:absolute;right:1770.7px;top:294.7px;line-height:17px;font-size:12.6px;font-family:'DejaVu Sans Mono','Liberation Mono',monospace;color:#8f8f8f;white-space:pre;">7</div>
<div style="position:absolute;left:195.8px;top:295.0px;width:46.3px;height:17px;background:#343434;"></div>
<div style="position:absolute;left:196.5px;top:294.0px;line-height:17px;height:17px;font:12.6px/17px 'DejaVu Sans Mono','Liberation Mono',monospace;color:#dcdcdc;white-space:pre;-webkit-text-stroke:0.25px">    {</div>
<div style="position:absolute;right:1770.7px;top:311.7px;line-height:17px;font-size:12.6px;font-family:'DejaVu Sans Mono','Liberation Mono',monospace;color:#8f8f8f;white-space:pre;">8</div>
<div style="position:absolute;left:195.8px;top:312.0px;width:243.9px;height:17px;background:#343434;"></div>
<div style="position:absolute;left:196.5px;top:311.0px;line-height:17px;height:17px;font:12.6px/17px 'DejaVu Sans Mono','Liberation Mono',monospace;color:#dcdcdc;white-space:pre;-webkit-text-stroke:0.25px">        [<span style="color:#4ec9b0">JsonProperty</span>(<span style="color:#d69d85">"items"</span>)]</div>
<div style="position:absolute;left:257.3px;top:329.7px;line-height:13px;font-size:11px;color:#9a9a9a;white-space:pre;letter-spacing:-0.195px;">0 references</div>
<div style="position:absolute;right:1770.7px;top:341.7px;line-height:17px;font-size:12.6px;font-family:'DejaVu Sans Mono','Liberation Mono',monospace;color:#8f8f8f;white-space:pre;">9</div>
<div style="position:absolute;left:195.8px;top:342.0px;width:570.7px;height:17px;background:#343434;"></div>
<div style="position:absolute;left:196.5px;top:341.0px;line-height:17px;height:17px;font:12.6px/17px 'DejaVu Sans Mono','Liberation Mono',monospace;color:#dcdcdc;white-space:pre;-webkit-text-stroke:0.25px">        <span style="color:#569cd6">public</span> <span style="color:#4ec9b0">List</span>&lt;<span style="color:#4ec9b0">Product</span>&gt; Products { <span style="color:#569cd6">get</span>; <span style="color:#569cd6">set</span>; } = <span style="color:#569cd6">new</span> <span style="color:#4ec9b0">List</span>&lt;<span style="color:#4ec9b0">Product</span>&gt;();</div>
<div style="position:absolute;right:1770.7px;top:358.7px;line-height:17px;font-size:12.6px;font-family:'DejaVu Sans Mono','Liberation Mono',monospace;color:#8f8f8f;white-space:pre;">10</div>
<div style="position:absolute;left:195.8px;top:359.0px;width:8.3px;height:17px;background:#343434;"></div>
<div style="position:absolute;right:1770.7px;top:375.7px;line-height:17px;font-size:12.6px;font-family:'DejaVu Sans Mono','Liberation Mono',monospace;color:#8f8f8f;white-space:pre;">11</div>
<div style="position:absolute;left:195.8px;top:376.0px;width:243.9px;height:17px;background:#343434;"></div>
<div style="position:absolute;left:196.5px;top:375.0px;line-height:17px;height:17px;font:12.6px/17px 'DejaVu Sans Mono','Liberation Mono',monospace;color:#dcdcdc;white-space:pre;-webkit-text-stroke:0.25px">        [<span style="color:#4ec9b0">JsonProperty</span>(<span style="color:#d69d85">"total"</span>)]</div>
<div style="position:absolute;left:257.3px;top:393.7px;line-height:13px;font-size:11px;color:#9a9a9a;white-space:pre;letter-spacing:-0.195px;">0 references</div>
<div style="position:absolute;right:1770.7px;top:405.7px;line-height:17px;font-size:12.6px;font-family:'DejaVu Sans Mono','Liberation Mono',monospace;color:#8f8f8f;white-space:pre;">12</div>
<div style="position:absolute;left:195.8px;top:406.0px;width:335.1px;height:17px;background:#343434;"></div>
<div style="position:absolute;left:196.5px;top:405.0px;line-height:17px;height:17px;font:12.6px/17px 'DejaVu Sans Mono','Liberation Mono',monospace;color:#dcdcdc;white-space:pre;-webkit-text-stroke:0.25px">        <span style="color:#569cd6">public</span> <span style="color:#569cd6">int</span> TotalCount { <span style="color:#569cd6">get</span>; <span style="color:#569cd6">set</span>; }</div>
<div style="position:absolute;right:1770.7px;top:422.7px;line-height:17px;font-size:12.6px;font-family:'DejaVu Sans Mono','Liberation Mono',monospace;color:#8f8f8f;white-space:pre;">13</div>
<div style="position:absolute;left:195.8px;top:423.0px;width:8.3px;height:17px;background:#343434;"></div>
<div style="position:absolute;right:1770.7px;top:439.7px;line-height:17px;font-size:12.6px;font-family:'DejaVu Sans Mono','Liberation Mono',monospace;color:#8f8f8f;white-space:pre;">14</div>
<div style="position:absolute;left:195.8px;top:440.0px;width:266.7px;height:17px;background:#343434;"></div>
<div style="position:absolute;left:196.5px;top:439.0px;line-height:17px;height:17px;font:12.6px/17px 'DejaVu Sans Mono','Liberation Mono',monospace;color:#dcdcdc;white-space:pre;-webkit-text-stroke:0.25px">        [<span style="color:#4ec9b0">JsonProperty</span>(<span style="color:#d69d85">"pageSize"</span>)]</div>
<div style="position:absolute;left:257.3px;top:457.7px;line-height:13px;font-size:11px;color:#9a9a9a;white-space:pre;letter-spacing:-0.195px;">0 references</div>
<div style="position:absolute;right:1770.7px;top:469.7px;line-height:17px;font-size:12.6px;font-family:'DejaVu Sans Mono','Liberation Mono',monospace;color:#8f8f8f;white-space:pre;">15</div>
<div style="position:absolute;left:195.8px;top:470.0px;width:365.5px;height:17px;background:#343434;"></div>
<div style="position:absolute;left:196.5px;top:469.0px;line-height:17px;height:17px;font:12.6px/17px 'DejaVu Sans Mono','Liberation Mono',monospace;color:#dcdcdc;white-space:pre;-webkit-text-stroke:0.25px">        <span style="color:#569cd6">public</span> <span style="color:#569cd6">int</span> PageSize { <span style="color:#569cd6">get</span>; <span style="color:#569cd6">set</span>; } = <span style="color:#b5cea8">10</span>;</div>
<div style="position:absolute;right:1770.7px;top:486.7px;line-height:17px;font-size:12.6px;font-family:'DejaVu Sans Mono','Liberation Mono',monospace;color:#8f8f8f;white-space:pre;">16</div>
<div style="position:absolute;left:195.8px;top:487.0px;width:8.3px;height:17px;background:#343434;"></div>
<div style="position:absolute;right:1770.7px;top:503.7px;line-height:17px;font-size:12.6px;font-family:'DejaVu Sans Mono','Liberation Mono',monospace;color:#8f8f8f;white-space:pre;">17</div>
<div style="position:absolute;left:195.8px;top:504.0px;width:236.3px;height:17px;background:#343434;"></div>
<div style="position:absolute;left:196.5px;top:503.0px;line-height:17px;height:17px;font:12.6px/17px 'DejaVu Sans Mono','Liberation Mono',monospace;color:#dcdcdc;white-space:pre;-webkit-text-stroke:0.25px">        [<span style="color:#4ec9b0">JsonProperty</span>(<span style="color:#d69d85">"page"</span>)]</div>
<div style="position:absolute;left:257.3px;top:521.7px;line-height:13px;font-size:11px;color:#9a9a9a;white-space:pre;letter-spacing:-0.195px;">0 references</div>
<div style="position:absolute;right:1770.7px;top:533.7px;line-height:17px;font-size:12.6px;font-family:'DejaVu Sans Mono','Liberation Mono',monospace;color:#8f8f8f;white-space:pre;">18</div>
<div style="position:absolute;left:195.8px;top:534.0px;width:373.1px;height:17px;background:#343434;"></div>
<div style="position:absolute;left:196.5px;top:533.0px;line-height:17px;height:17px;font:12.6px/17px 'DejaVu Sans Mono','Liberation Mono',monospace;color:#dcdcdc;white-space:pre;-webkit-text-stroke:0.25px">        <span style="color:#569cd6">public</span> <span style="color:#569cd6">int</span> PageNumber { <span style="color:#569cd6">get</span>; <span style="color:#569cd6">set</span>; } = <span style="color:#b5cea8">1</span>;</div>
<div style="position:absolute;right:1770.7px;top:550.7px;line-height:17px;font-size:12.6px;font-family:'DejaVu Sans Mono','Liberation Mono',monospace;color:#8f8f8f;white-space:pre;">19</div>
<div style="position:absolute;left:195.8px;top:551.0px;width:46.3px;height:17px;background:#343434;"></div>
<div style="position:absolute;left:196.5px;top:550.0px;line-height:17px;height:17px;font:12.6px/17px 'DejaVu Sans Mono','Liberation Mono',monospace;color:#dcdcdc;white-space:pre;-webkit-text-stroke:0.25px">    }</div>
<div style="position:absolute;right:1770.7px;top:567.7px;line-height:17px;font-size:12.6px;font-family:'DejaVu Sans Mono','Liberation Mono',monospace;color:#8f8f8f;white-space:pre;">20</div>
<div style="position:absolute;left:195.8px;top:568.0px;width:15.9px;height:17px;background:#343434;"></div>
<div style="position:absolute;left:196.5px;top:567.0px;line-height:17px;height:17px;font:12.6px/17px 'DejaVu Sans Mono','Liberation Mono',monospace;color:#dcdcdc;white-space:pre;-webkit-text-stroke:0.25px">}</div>
<div style="position:absolute;right:1770.7px;top:584.7px;line-height:17px;font-size:12.6px;font-family:'DejaVu Sans Mono','Liberation Mono',monospace;color:#f0f0f0;white-space:pre;">21</div>
<svg style="position:absolute;left:177px;top:185.3px;" width="10" height="6" viewBox="0 0 10 6"><path d="M0.7 0.7L5 4.8L9.3 0.7" fill="none" stroke="#c8c8c8" stroke-width="1.2"/></svg>
<svg style="position:absolute;left:177px;top:236.3px;" width="10" height="6" viewBox="0 0 10 6"><path d="M0.7 0.7L5 4.8L9.3 0.7" fill="none" stroke="#c8c8c8" stroke-width="1.2"/></svg>
<svg style="position:absolute;left:177px;top:283.3px;" width="10" height="6" viewBox="0 0 10 6"><path d="M0.7 0.7L5 4.8L9.3 0.7" fill="none" stroke="#c8c8c8" stroke-width="1.2"/></svg>
<svg style="position:absolute;left:181px;top:195px;" width="6" height="20" viewBox="0 0 6 20"><path d="M0.5 0.5V18.5H5" fill="none" stroke="#6a6a6a"/></svg>
<div style="position:absolute;left:181px;top:246px;width:1px;height:37px;background:#6a6a6a;"></div>
<svg style="position:absolute;left:181px;top:293px;" width="6" height="292" viewBox="0 0 6 292"><path d="M0.5 0V291.5H5" fill="none" stroke="#6a6a6a"/></svg>
<svg style="position:absolute;left:199px;top:265px;" width="1" height="303" viewBox="0 0 1 303"><path d="M0.5 0V303" stroke="#747474" stroke-dasharray="3 2"/></svg>
<svg style="position:absolute;left:230px;top:312px;" width="1" height="239" viewBox="0 0 1 239"><path d="M0.5 0V239" stroke="#747474" stroke-dasharray="3 2"/></svg>
<div style="position:absolute;left:1438px;top:180px;width:75px;height:622px;background:#3e3e42;"></div>
<svg style="position:absolute;left:1470.3px;top:186.0px;" width="10" height="5" viewBox="0 0 10 5"><path d="M0 5H10L5.0 0Z" fill="#9a9a9a"/></svg>
<svg style="position:absolute;left:1470.3px;top:791.5px;" width="10" height="5" viewBox="0 0 10 5"><path d="M0 0H10L5.0 5Z" fill="#9a9a9a"/></svg>
<div style="position:absolute;left:1438.5px;top:195.6px;width:74.3px;height:333.4px;background:#000;border:1px solid #7a7a7a;box-sizing:border-box;border-radius:3px;"></div>
<div style="position:absolute;left:1438.5px;top:404px;width:74.5px;height:3px;background:#f5f5f5;"></div>
<svg style="position:absolute;left:1438.5px;top:196px;" width="74" height="333" viewBox="0 0 74 333"><rect x="16.8" y="3.1" width="2.8" height="1.2" fill="#569cd6" opacity="0.6"/><rect x="19.5" y="3.1" width="15.4" height="1.2" fill="#dcdcdc" opacity="0.6"/><rect x="16.8" y="13.4" width="2.8" height="1.2" fill="#569cd6" opacity="0.6"/><rect x="19.5" y="13.4" width="9.4" height="1.2" fill="#dcdcdc" opacity="0.6"/><rect x="16.8" y="34.1" width="5.0" height="1.2" fill="#569cd6" opacity="0.6"/><rect x="21.7" y="34.1" width="14.9" height="1.2" fill="#dcdcdc" opacity="0.6"/><rect x="16.8" y="44.4" width="0.6" height="1.2" fill="#dcdcdc" opacity="0.6"/><rect x="19.0" y="54.7" width="3.3" height="1.2" fill="#569cd6" opacity="0.6"/><rect x="22.8" y="54.7" width="2.8" height="1.2" fill="#569cd6" opacity="0.6"/><rect x="26.1" y="54.7" width="15.4" height="1.2" fill="#4ec9b0" opacity="0.6"/><rect x="16.8" y="65.1" width="2.8" height="1.2" fill="#dcdcdc" opacity="0.6"/><rect x="16.8" y="75.4" width="5.0" height="1.2" fill="#dcdcdc" opacity="0.6"/><rect x="21.7" y="75.4" width="6.6" height="1.2" fill="#4ec9b0" opacity="0.6"/><rect x="28.3" y="75.4" width="0.6" height="1.2" fill="#dcdcdc" opacity="0.6"/><rect x="28.9" y="75.4" width="3.9" height="1.2" fill="#d69d85" opacity="0.6"/><rect x="32.7" y="75.4" width="1.1" height="1.2" fill="#dcdcdc" opacity="0.6"/><rect x="21.2" y="85.7" width="3.3" height="1.2" fill="#569cd6" opacity="0.6"/><rect x="25.0" y="85.7" width="2.2" height="1.2" fill="#4ec9b0" opacity="0.6"/><rect x="27.2" y="85.7" width="0.6" height="1.2" fill="#dcdcdc" opacity="0.6"/><rect x="27.8" y="85.7" width="3.9" height="1.2" fill="#4ec9b0" opacity="0.6"/><rect x="31.6" y="85.7" width="7.2" height="1.2" fill="#dcdcdc" opacity="0.6"/><rect x="38.8" y="85.7" width="1.7" height="1.2" fill="#569cd6" opacity="0.6"/><rect x="40.4" y="85.7" width="1.1" height="1.2" fill="#dcdcdc" opacity="0.6"/><rect x="41.5" y="85.7" width="1.7" height="1.2" fill="#569cd6" opacity="0.6"/><rect x="43.2" y="85.7" width="3.3" height="1.2" fill="#dcdcdc" opacity="0.6"/><rect x="46.5" y="85.7" width="1.7" height="1.2" fill="#569cd6" opacity="0.6"/><rect x="48.7" y="85.7" width="2.2" height="1.2" fill="#4ec9b0" opacity="0.6"/><rect x="50.9" y="85.7" width="0.6" height="1.2" fill="#dcdcdc" opacity="0.6"/><rect x="51.4" y="85.7" width="3.9" height="1.2" fill="#4ec9b0" opacity="0.6"/><rect x="55.3" y="85.7" width="2.2" height="1.2" fill="#dcdcdc" opacity="0.6"/><rect x="16.8" y="106.4" width="5.0" height="1.2" fill="#dcdcdc" opacity="0.6"/><rect x="21.7" y="106.4" width="6.6" height="1.2" fill="#4ec9b0" opacity="0.6"/><rect x="28.3" y="106.4" width="0.6" height="1.2" fill="#dcdcdc" opacity="0.6"/><rect x="28.9" y="106.4" width="3.9" height="1.2" fill="#d69d85" opacity="0.6"/><rect x="32.7" y="106.4" width="1.1" height="1.2" fill="#dcdcdc" opacity="0.6"/><rect x="21.2" y="116.7" width="3.3" height="1.2" fill="#569cd6" opacity="0.6"/><rect x="25.0" y="116.7" width="1.7" height="1.2" fill="#569cd6" opacity="0.6"/><rect x="26.7" y="116.7" width="7.7" height="1.2" fill="#dcdcdc" opacity="0.6"/><rect x="34.4" y="116.7" width="1.7" height="1.2" fill="#569cd6" opacity="0.6"/><rect x="36.0" y="116.7" width="1.1" height="1.2" fill="#dcdcdc" opacity="0.6"/><rect x="37.1" y="116.7" width="1.7" height="1.2" fill="#569cd6" opacity="0.6"/><rect x="38.8" y="116.7" width="1.7" height="1.2" fill="#dcdcdc" opacity="0.6"/><rect x="16.8" y="137.4" width="5.0" height="1.2" fill="#dcdcdc" opacity="0.6"/><rect x="21.7" y="137.4" width="6.6" height="1.2" fill="#4ec9b0" opacity="0.6"/><rect x="28.3" y="137.4" width="0.6" height="1.2" fill="#dcdcdc" opacity="0.6"/><rect x="28.9" y="137.4" width="5.5" height="1.2" fill="#d69d85" opacity="0.6"/><rect x="34.4" y="137.4" width="1.1" height="1.2" fill="#dcdcdc" opacity="0.6"/><rect x="21.2" y="147.7" width="3.3" height="1.2" fill="#569cd6" opacity="0.6"/><rect x="25.0" y="147.7" width="1.7" height="1.2" fill="#569cd6" opacity="0.6"/><rect x="26.7" y="147.7" width="6.6" height="1.2" fill="#dcdcdc" opacity="0.6"/><rect x="33.3" y="147.7" width="1.7" height="1.2" fill="#569cd6" opacity="0.6"/><rect x="34.9" y="147.7" width="1.1" height="1.2" fill="#dcdcdc" opacity="0.6"/><rect x="36.0" y="147.7" width="1.7" height="1.2" fill="#569cd6" opacity="0.6"/><rect x="37.7" y="147.7" width="3.3" height="1.2" fill="#dcdcdc" opacity="0.6"/><rect x="41.0" y="147.7" width="1.1" height="1.2" fill="#b5cea8" opacity="0.6"/><rect x="42.1" y="147.7" width="0.6" height="1.2" fill="#dcdcdc" opacity="0.6"/><rect x="16.8" y="168.4" width="5.0" height="1.2" fill="#dcdcdc" opacity="0.6"/><rect x="21.7" y="168.4" width="6.6" height="1.2" fill="#4ec9b0" opacity="0.6"/><rect x="28.3" y="168.4" width="0.6" height="1.2" fill="#dcdcdc" opacity="0.6"/><rect x="28.9" y="168.4" width="3.3" height="1.2" fill="#d69d85" opacity="0.6"/><rect x="32.2" y="168.4" width="1.1" height="1.2" fill="#dcdcdc" opacity="0.6"/><rect x="21.2" y="178.7" width="3.3" height="1.2" fill="#569cd6" opacity="0.6"/><rect x="25.0" y="178.7" width="1.7" height="1.2" fill="#569cd6" opacity="0.6"/><rect x="26.7" y="178.7" width="7.7" height="1.2" fill="#dcdcdc" opacity="0.6"/><rect x="34.4" y="178.7" width="1.7" height="1.2" fill="#569cd6" opacity="0.6"/><rect x="36.0" y="178.7" width="1.1" height="1.2" fill="#dcdcdc" opacity="0.6"/><rect x="37.1" y="178.7" width="1.7" height="1.2" fill="#569cd6" opacity="0.6"/><rect x="38.8" y="178.7" width="3.3" height="1.2" fill="#dcdcdc" opacity="0.6"/><rect x="42.1" y="178.7" width="0.6" height="1.2" fill="#b5cea8" opacity="0.6"/><rect x="42.6" y="178.7" width="0.6" height="1.2" fill="#dcdcdc" opacity="0.6"/><rect x="16.8" y="189.0" width="2.8" height="1.2" fill="#dcdcdc" opacity="0.6"/><rect x="16.8" y="199.4" width="0.6" height="1.2" fill="#dcdcdc" opacity="0.6"/></svg>
<div style="position:absolute;left:75px;top:802px;width:1438px;height:18px;background:#2e2e2e;"></div>
<div style="position:absolute;left:75px;top:802px;width:59px;height:18px;background:#333;"></div>
<div style="position:absolute;left:77.5px;top:803.5px;line-height:15px;font-size:11px;color:#f0f0f0;white-space:pre;letter-spacing:-0.338px;">100 %</div>
<svg style="position:absolute;left:125.69999999999999px;top:809.75px;" width="6" height="3.5" viewBox="0 0 6 3.5"><path d="M0 0H6L3.0 3.5Z" fill="#d0d0d0"/></svg>
<svg style="position:absolute;left:139px;top:804px;" width="12" height="14" viewBox="0 0 12 14"><path d="M6.4 1C9.4 1 11 3 11 5.6C11 7.4 10 8.4 9.6 9.6V12.6H4.6V10.8H3V8.4L1.4 7.8L3 5.2C3 2.6 4.4 1 6.4 1Z" fill="none" stroke="#8a6fc0" stroke-width="1.1"/><path d="M5 4.6C6.6 3.6 8.4 4.6 7.8 6.2C7.4 7.2 6.4 7 6.4 8.4" fill="none" stroke="#8a6fc0" stroke-width="1"/></svg>
<svg style="position:absolute;left:177.3px;top:805.3px;" width="11.4" height="11.4" viewBox="0 0 11.4 11.4"><circle cx="5.7" cy="5.7" r="5.7" fill="#4cc45a"/><path d="M2.8 5.9L4.9 7.9L8.6 3.9" fill="none" stroke="#10301a" stroke-width="1.5"/></svg>
<div style="position:absolute;left:194.3px;top:803.0px;line-height:16px;color:#f0f0f0;white-space:pre;letter-spacing:-0.203px;">No issues found</div>
<div style="position:absolute;left:336px;top:804px;width:1px;height:14px;background:#c0c0c0;"></div>
<svg style="position:absolute;left:350px;top:804px;" width="14" height="14" viewBox="0 0 14 14"><path d="M11.6 0.8L7.6 6.4" stroke="#d8d8d8" stroke-width="1.6"/><path d="M5.4 5.6L9.4 8.4L6 13.4L1.2 10.2Z" fill="#e8c37a"/><path d="M2.5 0.6V3.4M1.1 2H3.9M5.5 1.5L6.5 2.5" stroke="#e8c37a" stroke-width="0.8"/></svg>
<svg style="position:absolute;left:368.7px;top:809.75px;" width="6" height="3.5" viewBox="0 0 6 3.5"><path d="M0 0H6L3.0 3.5Z" fill="#d0d0d0"/></svg>
<svg style="position:absolute;left:404.5px;top:807.0px;" width="5" height="8" viewBox="0 0 5 8"><path d="M5 0V8L0 4.0Z" fill="#9a9a9a"/></svg>
<svg style="position:absolute;left:1312.5px;top:807.0px;" width="5" height="8" viewBox="0 0 5 8"><path d="M0 0V8L5 4.0Z" fill="#9a9a9a"/></svg>
<div style="position:absolute;left:1307px;top:802px;width:17px;height:18px;background:#343434;"></div>
<div style="position:absolute;left:399px;top:802px;width:17px;height:18px;background:#343434;"></div>
<div style="position:absolute;left:75px;top:819.3px;width:1438px;height:1px;background:#3c3c3c;"></div>
<div style="position:absolute;left:1346.5px;top:803.0px;line-height:16px;color:#e6e6e6;white-space:pre;letter-spacing:-0.810px;">Ln: 21</div>
<div style="position:absolute;left:1394.6px;top:803.0px;line-height:16px;color:#e6e6e6;white-space:pre;letter-spacing:-0.856px;">Ch: 1</div>
<div style="position:absolute;left:1430px;top:802px;width:37px;height:18px;background:#333;border:1px solid #404040;box-sizing:border-box;"></div>
<div style="position:absolute;left:1439.4px;top:804.0px;line-height:14.5px;font-size:10.5px;color:#e6e6e6;white-space:pre;letter-spacing:-1.230px;">SPC</div>
<div style="position:absolute;left:1469px;top:802px;width:44px;height:18px;background:#333;border:1px solid #404040;box-sizing:border-box;"></div>
<div style="position:absolute;left:1478.7px;top:804.0px;line-height:14.5px;font-size:10.5px;color:#e6e6e6;white-space:pre;letter-spacing:-0.930px;">CRLF</div>
<svg style="position:absolute;left:404.5px;top:807.0px;" width="5" height="8" viewBox="0 0 5 8"><path d="M5 0V8L0 4.0Z" fill="#9a9a9a"/></svg>
<svg style="position:absolute;left:1312.5px;top:807.0px;" width="5" height="8" viewBox="0 0 5 8"><path d="M0 0V8L5 4.0Z" fill="#9a9a9a"/></svg>
<!-- p4_solexp -->
<div style="position:absolute;left:1521px;top:137px;width:366px;height:2px;background:#7160e8;"></div>
<div style="position:absolute;left:1520.5px;top:139px;width:367px;height:661px;border:1px solid #3a3a3a;box-sizing:border-box;border-top:none;"></div>
<div style="position:absolute;left:1525.5px;top:139.6px;line-height:16px;color:#fafafa;white-space:pre;letter-spacing:-0.169px;">Solution Explorer</div>
<svg style="position:absolute;left:1622px;top:145px;" width="209" height="6" viewBox="0 0 209 6"><path d="M0 0.5H209M2 2.5H209M0 4.5H209" stroke="#5a5a5a" stroke-width="1" stroke-dasharray="1 3"/></svg>
<svg style="position:absolute;left:1839.0px;top:145.25px;" width="8" height="4.5" viewBox="0 0 8 4.5"><path d="M0 0H8L4.0 4.5Z" fill="#e0e0e0"/></svg>
<svg style="position:absolute;left:1855.5px;top:141px;" width="8" height="12" viewBox="0 0 8 12"><path d="M1.8 0.6H6.2M2.4 0.6V5.6M5.6 0.6V5.6M0.4 5.8H7.6M4 5.8V11.4" fill="none" stroke="#e6e6e6" stroke-width="1.2"/><path d="M4.6 0.6H5.8V5.6H4.6Z" fill="#e6e6e6"/></svg>
<svg style="position:absolute;left:1871.5px;top:143px;" width="9" height="9" viewBox="0 0 9 9"><path d="M0.5 0.5L8.5 8.5M8.5 0.5L0.5 8.5" stroke="#e6e6e6" stroke-width="1.4"/></svg>
<svg style="position:absolute;left:1527.5px;top:164px;" width="16" height="16" viewBox="0 0 16 16"><path d="M6.5 9.5V1.5H15.5V11.5H11" fill="none" stroke="#d8d8d8"/><path d="M8.5 4H13.5M8.5 6H13.5M8.5 8H13.5" stroke="#d8d8d8" stroke-width="0.9"/><path d="M9.4 7.2V15.2L7.4 16L3.6 12.6L1.8 14L1 13.6V8.8L1.8 8.4L3.6 9.8L7.4 6.4Z M7.5 9.4L5.2 11.2L7.5 13Z" fill="#8661c5" fill-rule="evenodd"/></svg>
<div style="position:absolute;left:1550px;top:162px;width:1px;height:20px;background:#444;"></div>
<svg style="position:absolute;left:1558px;top:164px;" width="16" height="16" viewBox="0 0 16 16"><circle cx="9" cy="9.6" r="5" fill="none" stroke="#d8d8d8" stroke-width="1.1"/><path d="M9 6.6V9.8H11.6" fill="none" stroke="#d8d8d8" stroke-width="1"/><path d="M0.5 0.8H6L4 3.4V6L2.6 5V3.4Z" fill="#4ba6f5"/></svg>
<svg style="position:absolute;left:1580.8px;top:170.75px;" width="6" height="3.5" viewBox="0 0 6 3.5"><path d="M0 0H6L3.0 3.5Z" fill="#d0d0d0"/></svg>
<svg style="position:absolute;left:1593px;top:164px;" width="16" height="16" viewBox="0 0 16 16"><path d="M5.2 2.6A6.3 6.3 0 1 0 9.5 2" fill="none" stroke="#3f9cf0" stroke-width="1.4"/><path d="M2.2 1.2H6.6V5.6" fill="none" stroke="#3f9cf0" stroke-width="1.3"/></svg>
<svg style="position:absolute;left:1617px;top:166px;" width="12" height="12" viewBox="0 0 12 12"><path d="M1 5.8L6 1.2L11 5.8M1 10.6L6 6L11 10.6" fill="none" stroke="#d8d8d8" stroke-width="1.3"/></svg>
<svg style="position:absolute;left:1637.5px;top:164.5px;" width="15" height="15" viewBox="0 0 15 15"><rect x="4.5" y="0.8" width="9.6" height="9.6" rx="1" fill="none" stroke="#d8d8d8" stroke-width="1.1"/><rect x="0.8" y="4.5" width="9.6" height="9.6" rx="1" fill="#2e2e2e" stroke="#d8d8d8" stroke-width="1.1"/></svg>
<div style="position:absolute;left:1659.5px;top:162px;width:1px;height:20px;background:#444;"></div>
<div style="position:absolute;left:1665px;top:161px;width:22px;height:22px;background:#2a2a2a;border:1px solid #7160e8;box-sizing:border-box;"></div>
<svg style="position:absolute;left:1669px;top:165px;" width="14" height="14" viewBox="0 0 14 14"><rect x="0.8" y="0.8" width="2.8" height="2.8" fill="none" stroke="#e6e6e6"/><rect x="5.6" y="5.2" width="3.2" height="3.2" fill="none" stroke="#e6e6e6"/><rect x="10" y="9.8" width="3.4" height="3.4" fill="none" stroke="#e6e6e6"/><path d="M2.2 3.6V6.8H5.6M7.2 8.4V11.4H10" fill="none" stroke="#e6e6e6"/></svg>
<svg style="position:absolute;left:1689.8px;top:170.75px;" width="6" height="3.5" viewBox="0 0 6 3.5"><path d="M0 0H6L3.0 3.5Z" fill="#d0d0d0"/></svg>
<div style="position:absolute;left:1702.5px;top:162px;width:1px;height:20px;background:#444;"></div>
<svg style="position:absolute;left:1710.5px;top:164.5px;" width="15" height="15" viewBox="0 0 15 15"><path d="M13.6 3L11.1 5.5L9.6 4L12.1 1.5A3.8 3.8 0 0 0 7.1 6.1L1.3 11.9A1.4 1.4 0 0 0 3.2 13.8L9 8A3.8 3.8 0 0 0 13.6 3Z" fill="#a8a8a8" stroke="#d8d8d8" stroke-width="1"/></svg>
<div style="position:absolute;left:1729px;top:160.5px;width:22px;height:22.5px;background:#2a2a2a;border:1px solid #7160e8;box-sizing:border-box;"></div>
<svg style="position:absolute;left:1733px;top:165px;" width="15" height="13" viewBox="0 0 15 13"><path d="M0.6 9.6H3.2V6.8H9.2V9.6H11" fill="none" stroke="#e6e6e6" stroke-width="1.2"/><path d="M10.8 5.2L12 4M12.4 7H14M9.6 3.8V2.4" stroke="#e8c37a" stroke-width="1"/></svg>
<div style="position:absolute;left:1523px;top:186.5px;width:362px;height:20.5px;background:#383838;border:1px solid #444;box-sizing:border-box;"></div>
<div style="position:absolute;left:1528.2px;top:188.8px;line-height:16px;color:#d6d6d6;white-space:pre;letter-spacing:-0.172px;">Search Solution Explorer (Ctrl+;)</div>
<svg style="position:absolute;left:1857px;top:190.5px;" width="12" height="12" viewBox="0 0 12 12"><circle cx="7.6" cy="4.4" r="3.4" fill="none" stroke="#e0e0e0" stroke-width="1.5"/><path d="M5 7L0.8 11.2" stroke="#e0e0e0" stroke-width="1.8"/></svg>
<svg style="position:absolute;left:1875.0px;top:195.25px;" width="6" height="3.5" viewBox="0 0 6 3.5"><path d="M0 0H6L3.0 3.5Z" fill="#d0d0d0"/></svg>
<svg style="position:absolute;left:1567.5px;top:213.8px;" width="6" height="10" viewBox="0 0 6 10"><path d="M0.7 0.9V9.1L5.2 5Z" fill="none" stroke="#c8c8c8" stroke-width="1.1"/></svg>
<svg style="position:absolute;left:1589.7px;top:212.0px;" width="15" height="12" viewBox="0 0 15 12"><path d="M0.6 11.4V0.6H5.6L7 2.2H14.4V11.4Z" fill="#8f7a4f" stroke="#f0cf85" stroke-width="1.1"/><path d="M0.6 2.4H6.4" stroke="#f0cf85" stroke-width="1"/></svg>
<div style="position:absolute;left:1610.4px;top:210.8px;line-height:16px;color:#fafafa;white-space:pre;letter-spacing:0.139px;">Content</div>
<svg style="position:absolute;left:1567.2px;top:234.92000000000002px;" width="7" height="7" viewBox="0 0 7 7"><path d="M6.6 0.2V6.6H0.2Z" fill="#d4d4d4"/></svg>
<svg style="position:absolute;left:1589.7px;top:231.02px;" width="15" height="12" viewBox="0 0 15 12"><path d="M0.6 11.4V0.6H5.6L7 2.2H14.4V11.4Z" fill="#8f7a4f" stroke="#f0cf85" stroke-width="1.1"/><path d="M0.6 2.4H6.4" stroke="#f0cf85" stroke-width="1"/></svg>
<div style="position:absolute;left:1610.4px;top:229.8px;line-height:16px;color:#fafafa;white-space:pre;letter-spacing:-0.092px;">Controllers</div>
<svg style="position:absolute;left:1585.8px;top:251.84000000000003px;" width="6" height="10" viewBox="0 0 6 10"><path d="M0.7 0.9V9.1L5.2 5Z" fill="none" stroke="#c8c8c8" stroke-width="1.1"/></svg>
<svg style="position:absolute;left:1597.6px;top:252.74px;" width="6.4" height="9" viewBox="0 0 6.4 9"><rect x="0.6" y="3.8" width="5.2" height="4.6" fill="#1c3a57" stroke="#4ba6f5" stroke-width="1.1"/><path d="M1.7 3.8V2.4A1.5 1.5 0 0 1 4.7 2.4V3.8" fill="none" stroke="#4ba6f5" stroke-width="1.1"/></svg>
<div style="position:absolute;left:1607.7px;top:251.1px;line-height:12px;font-size:11.5px;font-weight:bold;color:#6bd36b;white-space:pre;">C</div>
<svg style="position:absolute;left:1616px;top:252.04000000000002px;" width="7" height="8" viewBox="0 0 7 8"><path d="M2.2 0.4L1.4 7.2M5.2 0.4L4.4 7.2M0.2 2.5H6.8M0 5.2H6.4" stroke="#6bd36b" stroke-width="1.25" fill="none"/></svg>
<div style="position:absolute;left:1628.2px;top:248.8px;line-height:16px;color:#fafafa;white-space:pre;letter-spacing:0.088px;">AccountController.cs</div>
<svg style="position:absolute;left:1585.8px;top:270.86px;" width="6" height="10" viewBox="0 0 6 10"><path d="M0.7 0.9V9.1L5.2 5Z" fill="none" stroke="#c8c8c8" stroke-width="1.1"/></svg>
<svg style="position:absolute;left:1597.6px;top:271.76px;" width="6.4" height="9" viewBox="0 0 6.4 9"><rect x="0.6" y="3.8" width="5.2" height="4.6" fill="#1c3a57" stroke="#4ba6f5" stroke-width="1.1"/><path d="M1.7 3.8V2.4A1.5 1.5 0 0 1 4.7 2.4V3.8" fill="none" stroke="#4ba6f5" stroke-width="1.1"/></svg>
<div style="position:absolute;left:1607.7px;top:270.2px;line-height:12px;font-size:11.5px;font-weight:bold;color:#6bd36b;white-space:pre;">C</div>
<svg style="position:absolute;left:1616px;top:271.06px;" width="7" height="8" viewBox="0 0 7 8"><path d="M2.2 0.4L1.4 7.2M5.2 0.4L4.4 7.2M0.2 2.5H6.8M0 5.2H6.4" stroke="#6bd36b" stroke-width="1.25" fill="none"/></svg>
<div style="position:absolute;left:1628.2px;top:267.9px;line-height:16px;color:#fafafa;white-space:pre;letter-spacing:0.053px;">HomeController.cs</div>
<svg style="position:absolute;left:1585.8px;top:289.88px;" width="6" height="10" viewBox="0 0 6 10"><path d="M0.7 0.9V9.1L5.2 5Z" fill="none" stroke="#c8c8c8" stroke-width="1.1"/></svg>
<svg style="position:absolute;left:1597.6px;top:290.78px;" width="6.4" height="9" viewBox="0 0 6.4 9"><rect x="0.6" y="3.8" width="5.2" height="4.6" fill="#1c3a57" stroke="#4ba6f5" stroke-width="1.1"/><path d="M1.7 3.8V2.4A1.5 1.5 0 0 1 4.7 2.4V3.8" fill="none" stroke="#4ba6f5" stroke-width="1.1"/></svg>
<div style="position:absolute;left:1607.7px;top:289.2px;line-height:12px;font-size:11.5px;font-weight:bold;color:#6bd36b;white-space:pre;">C</div>
<svg style="position:absolute;left:1616px;top:290.08px;" width="7" height="8" viewBox="0 0 7 8"><path d="M2.2 0.4L1.4 7.2M5.2 0.4L4.4 7.2M0.2 2.5H6.8M0 5.2H6.4" stroke="#6bd36b" stroke-width="1.25" fill="none"/></svg>
<div style="position:absolute;left:1628.2px;top:286.9px;line-height:16px;color:#fafafa;white-space:pre;letter-spacing:-0.024px;">ManageController.cs</div>
<svg style="position:absolute;left:1585.8px;top:308.9px;" width="6" height="10" viewBox="0 0 6 10"><path d="M0.7 0.9V9.1L5.2 5Z" fill="none" stroke="#c8c8c8" stroke-width="1.1"/></svg>
<svg style="position:absolute;left:1597.6px;top:309.79999999999995px;" width="6.4" height="9" viewBox="0 0 6.4 9"><rect x="0.6" y="3.8" width="5.2" height="4.6" fill="#1c3a57" stroke="#4ba6f5" stroke-width="1.1"/><path d="M1.7 3.8V2.4A1.5 1.5 0 0 1 4.7 2.4V3.8" fill="none" stroke="#4ba6f5" stroke-width="1.1"/></svg>
<div style="position:absolute;left:1607.7px;top:308.2px;line-height:12px;font-size:11.5px;font-weight:bold;color:#6bd36b;white-space:pre;">C</div>
<svg style="position:absolute;left:1616px;top:309.09999999999997px;" width="7" height="8" viewBox="0 0 7 8"><path d="M2.2 0.4L1.4 7.2M5.2 0.4L4.4 7.2M0.2 2.5H6.8M0 5.2H6.4" stroke="#6bd36b" stroke-width="1.25" fill="none"/></svg>
<div style="position:absolute;left:1628.2px;top:305.9px;line-height:16px;color:#fafafa;white-space:pre;letter-spacing:0.010px;">MeController.cs</div>
<svg style="position:absolute;left:1585.8px;top:327.91999999999996px;" width="6" height="10" viewBox="0 0 6 10"><path d="M0.7 0.9V9.1L5.2 5Z" fill="none" stroke="#c8c8c8" stroke-width="1.1"/></svg>
<svg style="position:absolute;left:1598px;top:330.21999999999997px;" width="7" height="7" viewBox="0 0 7 7"><path d="M3.5 0V7M0 3.5H7" stroke="#6bd36b" stroke-width="1.3"/></svg>
<div style="position:absolute;left:1607.7px;top:327.2px;line-height:12px;font-size:11.5px;font-weight:bold;color:#6bd36b;white-space:pre;">C</div>
<svg style="position:absolute;left:1616px;top:328.11999999999995px;" width="7" height="8" viewBox="0 0 7 8"><path d="M2.2 0.4L1.4 7.2M5.2 0.4L4.4 7.2M0.2 2.5H6.8M0 5.2H6.4" stroke="#6bd36b" stroke-width="1.25" fill="none"/></svg>
<div style="position:absolute;left:1628.2px;top:324.9px;line-height:16px;color:#fafafa;white-space:pre;letter-spacing:-0.061px;">ProductPageController.cs</div>
<svg style="position:absolute;left:1567.2px;top:349.03999999999996px;" width="7" height="7" viewBox="0 0 7 7"><path d="M6.6 0.2V6.6H0.2Z" fill="#d4d4d4"/></svg>
<svg style="position:absolute;left:1589.7px;top:345.13999999999993px;" width="15" height="12" viewBox="0 0 15 12"><path d="M0.6 11.4V0.6H5.6L7 2.2H14.4V11.4Z" fill="#8f7a4f" stroke="#f0cf85" stroke-width="1.1"/><path d="M0.6 2.4H6.4" stroke="#f0cf85" stroke-width="1"/></svg>
<div style="position:absolute;left:1610.4px;top:343.9px;line-height:16px;color:#fafafa;white-space:pre;letter-spacing:-0.064px;">Models</div>
<svg style="position:absolute;left:1585.8px;top:365.9599999999999px;" width="6" height="10" viewBox="0 0 6 10"><path d="M0.7 0.9V9.1L5.2 5Z" fill="none" stroke="#c8c8c8" stroke-width="1.1"/></svg>
<svg style="position:absolute;left:1597.6px;top:366.8599999999999px;" width="6.4" height="9" viewBox="0 0 6.4 9"><rect x="0.6" y="3.8" width="5.2" height="4.6" fill="#1c3a57" stroke="#4ba6f5" stroke-width="1.1"/><path d="M1.7 3.8V2.4A1.5 1.5 0 0 1 4.7 2.4V3.8" fill="none" stroke="#4ba6f5" stroke-width="1.1"/></svg>
<div style="position:absolute;left:1607.7px;top:365.3px;line-height:12px;font-size:11.5px;font-weight:bold;color:#6bd36b;white-space:pre;">C</div>
<svg style="position:absolute;left:1616px;top:366.1599999999999px;" width="7" height="8" viewBox="0 0 7 8"><path d="M2.2 0.4L1.4 7.2M5.2 0.4L4.4 7.2M0.2 2.5H6.8M0 5.2H6.4" stroke="#6bd36b" stroke-width="1.25" fill="none"/></svg>
<div style="position:absolute;left:1628.2px;top:363.0px;line-height:16px;color:#fafafa;white-space:pre;letter-spacing:-0.028px;">AccountViewModels.cs</div>
<svg style="position:absolute;left:1585.8px;top:384.9799999999999px;" width="6" height="10" viewBox="0 0 6 10"><path d="M0.7 0.9V9.1L5.2 5Z" fill="none" stroke="#c8c8c8" stroke-width="1.1"/></svg>
<svg style="position:absolute;left:1597.6px;top:385.8799999999999px;" width="6.4" height="9" viewBox="0 0 6.4 9"><rect x="0.6" y="3.8" width="5.2" height="4.6" fill="#1c3a57" stroke="#4ba6f5" stroke-width="1.1"/><path d="M1.7 3.8V2.4A1.5 1.5 0 0 1 4.7 2.4V3.8" fill="none" stroke="#4ba6f5" stroke-width="1.1"/></svg>
<div style="position:absolute;left:1607.7px;top:384.3px;line-height:12px;font-size:11.5px;font-weight:bold;color:#6bd36b;white-space:pre;">C</div>
<svg style="position:absolute;left:1616px;top:385.1799999999999px;" width="7" height="8" viewBox="0 0 7 8"><path d="M2.2 0.4L1.4 7.2M5.2 0.4L4.4 7.2M0.2 2.5H6.8M0 5.2H6.4" stroke="#6bd36b" stroke-width="1.25" fill="none"/></svg>
<div style="position:absolute;left:1628.2px;top:382.0px;line-height:16px;color:#fafafa;white-space:pre;letter-spacing:-0.012px;">IdentityModels.cs</div>
<svg style="position:absolute;left:1585.8px;top:403.9999999999999px;" width="6" height="10" viewBox="0 0 6 10"><path d="M0.7 0.9V9.1L5.2 5Z" fill="none" stroke="#c8c8c8" stroke-width="1.1"/></svg>
<svg style="position:absolute;left:1597.6px;top:404.89999999999986px;" width="6.4" height="9" viewBox="0 0 6.4 9"><rect x="0.6" y="3.8" width="5.2" height="4.6" fill="#1c3a57" stroke="#4ba6f5" stroke-width="1.1"/><path d="M1.7 3.8V2.4A1.5 1.5 0 0 1 4.7 2.4V3.8" fill="none" stroke="#4ba6f5" stroke-width="1.1"/></svg>
<div style="position:absolute;left:1607.7px;top:403.3px;line-height:12px;font-size:11.5px;font-weight:bold;color:#6bd36b;white-space:pre;">C</div>
<svg style="position:absolute;left:1616px;top:404.1999999999999px;" width="7" height="8" viewBox="0 0 7 8"><path d="M2.2 0.4L1.4 7.2M5.2 0.4L4.4 7.2M0.2 2.5H6.8M0 5.2H6.4" stroke="#6bd36b" stroke-width="1.25" fill="none"/></svg>
<div style="position:absolute;left:1628.2px;top:401.0px;line-height:16px;color:#fafafa;white-space:pre;letter-spacing:-0.140px;">ManageViewModels.cs</div>
<svg style="position:absolute;left:1585.8px;top:423.01999999999987px;" width="6" height="10" viewBox="0 0 6 10"><path d="M0.7 0.9V9.1L5.2 5Z" fill="none" stroke="#c8c8c8" stroke-width="1.1"/></svg>
<svg style="position:absolute;left:1597.6px;top:423.91999999999985px;" width="6.4" height="9" viewBox="0 0 6.4 9"><rect x="0.6" y="3.8" width="5.2" height="4.6" fill="#1c3a57" stroke="#4ba6f5" stroke-width="1.1"/><path d="M1.7 3.8V2.4A1.5 1.5 0 0 1 4.7 2.4V3.8" fill="none" stroke="#4ba6f5" stroke-width="1.1"/></svg>
<div style="position:absolute;left:1607.7px;top:422.3px;line-height:12px;font-size:11.5px;font-weight:bold;color:#6bd36b;white-space:pre;">C</div>
<svg style="position:absolute;left:1616px;top:423.21999999999986px;" width="7" height="8" viewBox="0 0 7 8"><path d="M2.2 0.4L1.4 7.2M5.2 0.4L4.4 7.2M0.2 2.5H6.8M0 5.2H6.4" stroke="#6bd36b" stroke-width="1.25" fill="none"/></svg>
<div style="position:absolute;left:1628.2px;top:420.0px;line-height:16px;color:#fafafa;white-space:pre;letter-spacing:-0.132px;">MeViewModels.cs</div>
<svg style="position:absolute;left:1585.8px;top:442.03999999999985px;" width="6" height="10" viewBox="0 0 6 10"><path d="M0.7 0.9V9.1L5.2 5Z" fill="none" stroke="#c8c8c8" stroke-width="1.1"/></svg>
<svg style="position:absolute;left:1598px;top:444.33999999999986px;" width="7" height="7" viewBox="0 0 7 7"><path d="M3.5 0V7M0 3.5H7" stroke="#6bd36b" stroke-width="1.3"/></svg>
<div style="position:absolute;left:1607.7px;top:441.3px;line-height:12px;font-size:11.5px;font-weight:bold;color:#6bd36b;white-space:pre;">C</div>
<svg style="position:absolute;left:1616px;top:442.23999999999984px;" width="7" height="8" viewBox="0 0 7 8"><path d="M2.2 0.4L1.4 7.2M5.2 0.4L4.4 7.2M0.2 2.5H6.8M0 5.2H6.4" stroke="#6bd36b" stroke-width="1.25" fill="none"/></svg>
<div style="position:absolute;left:1628.2px;top:439.0px;line-height:16px;color:#fafafa;white-space:pre;letter-spacing:-0.099px;">Product.cs</div>
<svg style="position:absolute;left:1585.8px;top:461.05999999999983px;" width="6" height="10" viewBox="0 0 6 10"><path d="M0.7 0.9V9.1L5.2 5Z" fill="none" stroke="#c8c8c8" stroke-width="1.1"/></svg>
<svg style="position:absolute;left:1598px;top:463.35999999999984px;" width="7" height="7" viewBox="0 0 7 7"><path d="M3.5 0V7M0 3.5H7" stroke="#6bd36b" stroke-width="1.3"/></svg>
<div style="position:absolute;left:1607.7px;top:460.4px;line-height:12px;font-size:11.5px;font-weight:bold;color:#6bd36b;white-space:pre;">C</div>
<svg style="position:absolute;left:1616px;top:461.2599999999998px;" width="7" height="8" viewBox="0 0 7 8"><path d="M2.2 0.4L1.4 7.2M5.2 0.4L4.4 7.2M0.2 2.5H6.8M0 5.2H6.4" stroke="#6bd36b" stroke-width="1.25" fill="none"/></svg>
<div style="position:absolute;left:1628.2px;top:458.1px;line-height:16px;color:#fafafa;white-space:pre;letter-spacing:-0.347px;">ProductResponsePagedResponse.cs</div>
<svg style="position:absolute;left:1567.2px;top:482.17999999999984px;" width="7" height="7" viewBox="0 0 7 7"><path d="M6.6 0.2V6.6H0.2Z" fill="#d4d4d4"/></svg>
<svg style="position:absolute;left:1589.7px;top:478.2799999999998px;" width="15" height="12" viewBox="0 0 15 12"><path d="M0.6 11.4V0.6H5.6L7 2.2H14.4V11.4Z" fill="#8f7a4f" stroke="#f0cf85" stroke-width="1.1"/><path d="M0.6 2.4H6.4" stroke="#f0cf85" stroke-width="1"/></svg>
<div style="position:absolute;left:1610.4px;top:477.1px;line-height:16px;color:#fafafa;white-space:pre;letter-spacing:-0.298px;">Providers</div>
<svg style="position:absolute;left:1585.8px;top:499.0999999999998px;" width="6" height="10" viewBox="0 0 6 10"><path d="M0.7 0.9V9.1L5.2 5Z" fill="none" stroke="#c8c8c8" stroke-width="1.1"/></svg>
<svg style="position:absolute;left:1597.6px;top:499.9999999999998px;" width="6.4" height="9" viewBox="0 0 6.4 9"><rect x="0.6" y="3.8" width="5.2" height="4.6" fill="#1c3a57" stroke="#4ba6f5" stroke-width="1.1"/><path d="M1.7 3.8V2.4A1.5 1.5 0 0 1 4.7 2.4V3.8" fill="none" stroke="#4ba6f5" stroke-width="1.1"/></svg>
<div style="position:absolute;left:1607.7px;top:498.4px;line-height:12px;font-size:11.5px;font-weight:bold;color:#6bd36b;white-space:pre;">C</div>
<svg style="position:absolute;left:1616px;top:499.2999999999998px;" width="7" height="8" viewBox="0 0 7 8"><path d="M2.2 0.4L1.4 7.2M5.2 0.4L4.4 7.2M0.2 2.5H6.8M0 5.2H6.4" stroke="#6bd36b" stroke-width="1.25" fill="none"/></svg>
<div style="position:absolute;left:1628.2px;top:496.1px;line-height:16px;color:#fafafa;white-space:pre;letter-spacing:0.060px;">ApplicationOAuthProvider.cs</div>
<svg style="position:absolute;left:1567.5px;top:518.1199999999998px;" width="6" height="10" viewBox="0 0 6 10"><path d="M0.7 0.9V9.1L5.2 5Z" fill="none" stroke="#c8c8c8" stroke-width="1.1"/></svg>
<svg style="position:absolute;left:1589.7px;top:516.3199999999998px;" width="15" height="12" viewBox="0 0 15 12"><path d="M0.6 11.4V0.6H5.6L7 2.2H14.4V11.4Z" fill="#8f7a4f" stroke="#f0cf85" stroke-width="1.1"/><path d="M0.6 2.4H6.4" stroke="#f0cf85" stroke-width="1"/></svg>
<div style="position:absolute;left:1610.4px;top:515.1px;line-height:16px;color:#fafafa;white-space:pre;letter-spacing:-0.573px;">Results</div>
<svg style="position:absolute;left:1567.5px;top:537.1399999999998px;" width="6" height="10" viewBox="0 0 6 10"><path d="M0.7 0.9V9.1L5.2 5Z" fill="none" stroke="#c8c8c8" stroke-width="1.1"/></svg>
<svg style="position:absolute;left:1589.7px;top:535.3399999999998px;" width="15" height="12" viewBox="0 0 15 12"><path d="M0.6 11.4V0.6H5.6L7 2.2H14.4V11.4Z" fill="#8f7a4f" stroke="#f0cf85" stroke-width="1.1"/><path d="M0.6 2.4H6.4" stroke="#f0cf85" stroke-width="1"/></svg>
<div style="position:absolute;left:1610.4px;top:534.1px;line-height:16px;color:#fafafa;white-space:pre;letter-spacing:-0.239px;">Scripts</div>
<svg style="position:absolute;left:1567.2px;top:558.2599999999998px;" width="7" height="7" viewBox="0 0 7 7"><path d="M6.6 0.2V6.6H0.2Z" fill="#d4d4d4"/></svg>
<svg style="position:absolute;left:1589.7px;top:554.3599999999998px;" width="15" height="12" viewBox="0 0 15 12"><path d="M0.6 11.4V0.6H5.6L7 2.2H14.4V11.4Z" fill="#8f7a4f" stroke="#f0cf85" stroke-width="1.1"/><path d="M0.6 2.4H6.4" stroke="#f0cf85" stroke-width="1"/></svg>
<div style="position:absolute;left:1610.4px;top:553.2px;line-height:16px;color:#fafafa;white-space:pre;letter-spacing:-0.498px;">Views</div>
<svg style="position:absolute;left:1585.8px;top:575.1799999999997px;" width="6" height="10" viewBox="0 0 6 10"><path d="M0.7 0.9V9.1L5.2 5Z" fill="none" stroke="#c8c8c8" stroke-width="1.1"/></svg>
<svg style="position:absolute;left:1607.7px;top:573.3799999999998px;" width="15" height="12" viewBox="0 0 15 12"><path d="M0.6 11.4V0.6H5.6L7 2.2H14.4V11.4Z" fill="#8f7a4f" stroke="#f0cf85" stroke-width="1.1"/><path d="M0.6 2.4H6.4" stroke="#f0cf85" stroke-width="1"/></svg>
<div style="position:absolute;left:1628.4px;top:572.2px;line-height:16px;color:#fafafa;white-space:pre;letter-spacing:0.192px;">Account</div>
<svg style="position:absolute;left:1585.8px;top:594.1999999999997px;" width="6" height="10" viewBox="0 0 6 10"><path d="M0.7 0.9V9.1L5.2 5Z" fill="none" stroke="#c8c8c8" stroke-width="1.1"/></svg>
<svg style="position:absolute;left:1607.7px;top:592.3999999999997px;" width="15" height="12" viewBox="0 0 15 12"><path d="M0.6 11.4V0.6H5.6L7 2.2H14.4V11.4Z" fill="#8f7a4f" stroke="#f0cf85" stroke-width="1.1"/><path d="M0.6 2.4H6.4" stroke="#f0cf85" stroke-width="1"/></svg>
<div style="position:absolute;left:1628.4px;top:591.2px;line-height:16px;color:#fafafa;white-space:pre;letter-spacing:0.048px;">Home</div>
<svg style="position:absolute;left:1585.8px;top:613.2199999999997px;" width="6" height="10" viewBox="0 0 6 10"><path d="M0.7 0.9V9.1L5.2 5Z" fill="none" stroke="#c8c8c8" stroke-width="1.1"/></svg>
<svg style="position:absolute;left:1607.7px;top:611.4199999999997px;" width="15" height="12" viewBox="0 0 15 12"><path d="M0.6 11.4V0.6H5.6L7 2.2H14.4V11.4Z" fill="#8f7a4f" stroke="#f0cf85" stroke-width="1.1"/><path d="M0.6 2.4H6.4" stroke="#f0cf85" stroke-width="1"/></svg>
<div style="position:absolute;left:1628.4px;top:610.2px;line-height:16px;color:#fafafa;white-space:pre;letter-spacing:-0.210px;">Manage</div>
<div style="position:absolute;left:1521px;top:627.5px;width:349px;height:18.5px;background:#3a3a3a;border:1px solid #6a6a6a;box-sizing:border-box;"></div>
<svg style="position:absolute;left:1607.7px;top:630.4399999999997px;" width="15" height="12" viewBox="0 0 15 12"><path d="M0.6 11.4V0.6H5.6L7 2.2H14.4V11.4Z" fill="#8f7a4f" stroke="#f0cf85" stroke-width="1.1"/><path d="M0.6 2.4H6.4" stroke="#f0cf85" stroke-width="1"/></svg>
<div style="position:absolute;left:1628.4px;top:629.2px;line-height:16px;color:#fafafa;white-space:pre;letter-spacing:-0.207px;">ProductPage</div>
<svg style="position:absolute;left:1584.7px;top:653.3599999999997px;" width="7" height="7" viewBox="0 0 7 7"><path d="M6.6 0.2V6.6H0.2Z" fill="#d4d4d4"/></svg>
<svg style="position:absolute;left:1607.7px;top:649.4599999999997px;" width="15" height="12" viewBox="0 0 15 12"><path d="M0.6 11.4V0.6H5.6L7 2.2H14.4V11.4Z" fill="#8f7a4f" stroke="#f0cf85" stroke-width="1.1"/><path d="M0.6 2.4H6.4" stroke="#f0cf85" stroke-width="1"/></svg>
<div style="position:absolute;left:1628.4px;top:648.3px;line-height:16px;color:#fafafa;white-space:pre;letter-spacing:-0.582px;">Shared</div>
<svg style="position:absolute;left:1615.8px;top:672.2799999999996px;" width="7" height="7" viewBox="0 0 7 7"><path d="M0.5 3.8L2.6 6L6.5 0.8" fill="none" stroke="#e5484d" stroke-width="1.3"/></svg>
<svg style="position:absolute;left:1626.2px;top:669.2799999999996px;" width="14.6" height="12" viewBox="0 0 14.6 12"><path d="M3 0.6H0.7V11.4H3M11.6 0.6H13.9V11.4H11.6" fill="none" stroke="#d8d8d8" stroke-width="1.2"/><circle cx="7.3" cy="6" r="3.5" fill="none" stroke="#c0c0c0" stroke-width="1"/><circle cx="7.3" cy="6" r="1.4" fill="none" stroke="#c0c0c0" stroke-width="0.9"/><path d="M8.8 4.6V7.4H10" fill="none" stroke="#c0c0c0" stroke-width="0.8"/></svg>
<div style="position:absolute;left:1646.3px;top:667.3px;line-height:16px;color:#fafafa;white-space:pre;letter-spacing:-0.093px;">_Layout.cshtml</div>
<svg style="position:absolute;left:1615.8px;top:690.1999999999996px;" width="6.4" height="9" viewBox="0 0 6.4 9"><rect x="0.6" y="3.8" width="5.2" height="4.6" fill="#1c3a57" stroke="#4ba6f5" stroke-width="1.1"/><path d="M1.7 3.8V2.4A1.5 1.5 0 0 1 4.7 2.4V3.8" fill="none" stroke="#4ba6f5" stroke-width="1.1"/></svg>
<svg style="position:absolute;left:1626.2px;top:688.2999999999996px;" width="14.6" height="12" viewBox="0 0 14.6 12"><path d="M3 0.6H0.7V11.4H3M11.6 0.6H13.9V11.4H11.6" fill="none" stroke="#d8d8d8" stroke-width="1.2"/><circle cx="7.3" cy="6" r="3.5" fill="none" stroke="#c0c0c0" stroke-width="1"/><circle cx="7.3" cy="6" r="1.4" fill="none" stroke="#c0c0c0" stroke-width="0.9"/><path d="M8.8 4.6V7.4H10" fill="none" stroke="#c0c0c0" stroke-width="0.8"/></svg>
<div style="position:absolute;left:1646.3px;top:686.3px;line-height:16px;color:#fafafa;white-space:pre;letter-spacing:-0.092px;">_LoginPartial.cshtml</div>
<svg style="position:absolute;left:1615.8px;top:709.2199999999996px;" width="6.4" height="9" viewBox="0 0 6.4 9"><rect x="0.6" y="3.8" width="5.2" height="4.6" fill="#1c3a57" stroke="#4ba6f5" stroke-width="1.1"/><path d="M1.7 3.8V2.4A1.5 1.5 0 0 1 4.7 2.4V3.8" fill="none" stroke="#4ba6f5" stroke-width="1.1"/></svg>
<svg style="position:absolute;left:1626.2px;top:707.3199999999996px;" width="14.6" height="12" viewBox="0 0 14.6 12"><path d="M3 0.6H0.7V11.4H3M11.6 0.6H13.9V11.4H11.6" fill="none" stroke="#d8d8d8" stroke-width="1.2"/><circle cx="7.3" cy="6" r="3.5" fill="none" stroke="#c0c0c0" stroke-width="1"/><circle cx="7.3" cy="6" r="1.4" fill="none" stroke="#c0c0c0" stroke-width="0.9"/><path d="M8.8 4.6V7.4H10" fill="none" stroke="#c0c0c0" stroke-width="0.8"/></svg>
<div style="position:absolute;left:1646.3px;top:705.3px;line-height:16px;color:#fafafa;white-space:pre;letter-spacing:-0.059px;">Error.cshtml</div>
<svg style="position:absolute;left:1615.8px;top:728.2399999999996px;" width="6.4" height="9" viewBox="0 0 6.4 9"><rect x="0.6" y="3.8" width="5.2" height="4.6" fill="#1c3a57" stroke="#4ba6f5" stroke-width="1.1"/><path d="M1.7 3.8V2.4A1.5 1.5 0 0 1 4.7 2.4V3.8" fill="none" stroke="#4ba6f5" stroke-width="1.1"/></svg>
<svg style="position:absolute;left:1626.2px;top:726.3399999999996px;" width="14.6" height="12" viewBox="0 0 14.6 12"><path d="M3 0.6H0.7V11.4H3M11.6 0.6H13.9V11.4H11.6" fill="none" stroke="#d8d8d8" stroke-width="1.2"/><circle cx="7.3" cy="6" r="3.5" fill="none" stroke="#c0c0c0" stroke-width="1"/><circle cx="7.3" cy="6" r="1.4" fill="none" stroke="#c0c0c0" stroke-width="0.9"/><path d="M8.8 4.6V7.4H10" fill="none" stroke="#c0c0c0" stroke-width="0.8"/></svg>
<div style="position:absolute;left:1646.3px;top:724.3px;line-height:16px;color:#fafafa;white-space:pre;letter-spacing:0.077px;">Lockout.cshtml</div>
<svg style="position:absolute;left:1597.1999999999998px;top:747.2599999999995px;" width="6.4" height="9" viewBox="0 0 6.4 9"><rect x="0.6" y="3.8" width="5.2" height="4.6" fill="#1c3a57" stroke="#4ba6f5" stroke-width="1.1"/><path d="M1.7 3.8V2.4A1.5 1.5 0 0 1 4.7 2.4V3.8" fill="none" stroke="#4ba6f5" stroke-width="1.1"/></svg>
<svg style="position:absolute;left:1607.6px;top:745.3599999999996px;" width="14.6" height="12" viewBox="0 0 14.6 12"><path d="M3 0.6H0.7V11.4H3M11.6 0.6H13.9V11.4H11.6" fill="none" stroke="#d8d8d8" stroke-width="1.2"/><circle cx="7.3" cy="6" r="3.5" fill="none" stroke="#c0c0c0" stroke-width="1"/><circle cx="7.3" cy="6" r="1.4" fill="none" stroke="#c0c0c0" stroke-width="0.9"/><path d="M8.8 4.6V7.4H10" fill="none" stroke="#c0c0c0" stroke-width="0.8"/></svg>
<div style="position:absolute;left:1627.7px;top:743.4px;line-height:16px;color:#fafafa;white-space:pre;letter-spacing:-0.212px;">_ViewStart.cshtml</div>
<svg style="position:absolute;left:1597.6px;top:766.2799999999995px;" width="6.4" height="9" viewBox="0 0 6.4 9"><rect x="0.6" y="3.8" width="5.2" height="4.6" fill="#1c3a57" stroke="#4ba6f5" stroke-width="1.1"/><path d="M1.7 3.8V2.4A1.5 1.5 0 0 1 4.7 2.4V3.8" fill="none" stroke="#4ba6f5" stroke-width="1.1"/></svg>
<svg style="position:absolute;left:1607px;top:763.3799999999995px;" width="14" height="14" viewBox="0 0 14 14"><path d="M4.5 2.5V0.8H10L13.2 4V13.2H8" fill="none" stroke="#d8d8d8" stroke-width="1.1"/><path d="M7.6 5.4L5.9 7.1L4.9 6.1L6.6 4.4A2.7 2.7 0 0 0 3.1 7.6L0.4 10.8L2 12.6L5 9.6A2.7 2.7 0 0 0 7.6 5.4Z" fill="#d8d8d8"/></svg>
<div style="position:absolute;left:1628.3px;top:762.4px;line-height:16px;color:#fafafa;white-space:pre;letter-spacing:0.019px;">Web.config</div>
<svg style="position:absolute;left:1579.7px;top:785.2999999999995px;" width="6.4" height="9" viewBox="0 0 6.4 9"><rect x="0.6" y="3.8" width="5.2" height="4.6" fill="#1c3a57" stroke="#4ba6f5" stroke-width="1.1"/><path d="M1.7 3.8V2.4A1.5 1.5 0 0 1 4.7 2.4V3.8" fill="none" stroke="#4ba6f5" stroke-width="1.1"/></svg>
<svg style="position:absolute;left:1590.5px;top:782.3999999999995px;" width="13" height="14" viewBox="0 0 13 14"><path d="M0.6 0.6H8.6L12.2 4.2V13.4H0.6Z" fill="none" stroke="#d8d8d8" stroke-width="1.1"/><path d="M2.6 5.6H10.2V11.4H2.6Z" fill="none" stroke="#9a9a9a" stroke-width="0.9" stroke-dasharray="1 1"/><path d="M6.4 6.4L7.2 8H8.8L7.6 9L8 10.6L6.4 9.8L4.8 10.6L5.2 9L4 8H5.6Z" fill="#e0e0e0"/></svg>
<div style="position:absolute;left:1610.0px;top:781.4px;line-height:16px;color:#fafafa;white-space:pre;letter-spacing:0.064px;">favicon.ico</div>
<div style="position:absolute;left:1870px;top:209px;width:17px;height:591px;background:#262626;"></div>
<svg style="position:absolute;left:1873.5px;top:215.0px;" width="10" height="5" viewBox="0 0 10 5"><path d="M0 5H10L5.0 0Z" fill="#9a9a9a"/></svg>
<svg style="position:absolute;left:1873.5px;top:788.0px;" width="10" height="5" viewBox="0 0 10 5"><path d="M0 0H10L5.0 5Z" fill="#9a9a9a"/></svg>
<div style="position:absolute;left:1874px;top:343px;width:9px;height:278px;background:#4d4d4d;"></div>
<div style="position:absolute;left:1521px;top:800px;width:73.5px;height:19.5px;background:#1f1f1f;border:1px solid #3f3f3f;box-sizing:border-box;border-top:none;"></div>
<div style="position:absolute;left:1526.5px;top:801.2px;line-height:16px;color:#fafafa;white-space:pre;letter-spacing:-0.285px;">Solution E...</div>
<div style="position:absolute;left:1601.5px;top:801.2px;line-height:16px;color:#b4b4b4;white-space:pre;letter-spacing:-0.227px;">Git Chang...</div>
<div style="position:absolute;left:1675.8px;top:801.2px;line-height:16px;color:#b4b4b4;white-space:pre;letter-spacing:-0.374px;">Test Explo...</div>
<div style="position:absolute;left:1752.4px;top:801.2px;line-height:16px;color:#b4b4b4;white-space:pre;letter-spacing:-0.213px;">GitHub C...</div>
<div style="position:absolute;left:1827.4px;top:801.2px;line-height:16px;color:#b4b4b4;white-space:pre;letter-spacing:-0.413px;">Class View</div>
<div style="position:absolute;left:1913.5px;top:136px;width:5px;height:52px;background:#3a3a3a;"></div>
<div style="position:absolute;left:1911px;top:137px;transform-origin:0 0;transform:rotate(90deg);white-space:pre;line-height:16px;color:#d6d6d6;letter-spacing:-0.319px">Properties</div>
<div style="position:absolute;left:1918.5px;top:65px;width:1.5px;height:920px;background:#171717;"></div>
<!-- p5_bottom -->
<div style="position:absolute;left:74.5px;top:827px;width:1813px;height:108.5px;border:1px solid #3a3a3a;box-sizing:border-box;"></div>
<div style="position:absolute;left:79.2px;top:830.0px;line-height:16px;color:#c8c8c8;white-space:pre;letter-spacing:-0.250px;">Package Manager Console</div>
<svg style="position:absolute;left:1839.0px;top:835.25px;" width="8" height="4.5" viewBox="0 0 8 4.5"><path d="M0 0H8L4.0 4.5Z" fill="#e0e0e0"/></svg>
<svg style="position:absolute;left:1855.5px;top:831px;" width="8" height="12" viewBox="0 0 8 12"><path d="M1.8 0.6H6.2M2.4 0.6V5.6M5.6 0.6V5.6M0.4 5.8H7.6M4 5.8V11.4" fill="none" stroke="#e6e6e6" stroke-width="1.2"/><path d="M4.6 0.6H5.8V5.6H4.6Z" fill="#e6e6e6"/></svg>
<svg style="position:absolute;left:1871.5px;top:833px;" width="9" height="9" viewBox="0 0 9 9"><path d="M0.5 0.5L8.5 8.5M8.5 0.5L0.5 8.5" stroke="#e6e6e6" stroke-width="1.4"/></svg>
<div style="position:absolute;left:82.0px;top:854.0px;line-height:16px;color:#e6e6e6;white-space:pre;letter-spacing:-0.305px;">Package source:</div>
<div style="position:absolute;left:173px;top:851px;width:180px;height:20.5px;background:#383838;border:1px solid #454545;box-sizing:border-box;"></div>
<div style="position:absolute;left:176.8px;top:854.0px;line-height:16px;color:#fafafa;white-space:pre;letter-spacing:-0.112px;">All</div>
<svg style="position:absolute;left:342.3px;top:860.25px;" width="6" height="3.5" viewBox="0 0 6 3.5"><path d="M0 0H6L3.0 3.5Z" fill="#d0d0d0"/></svg>
<svg style="position:absolute;left:359.6px;top:854.3px;" width="14" height="14" viewBox="0 0 14 14"><path d="M13.17 5.75L13.17 8.25L11.48 8.06L10.92 9.41L12.25 10.48L10.48 12.25L9.41 10.92L8.06 11.48L8.25 13.17L5.75 13.17L5.94 11.48L4.59 10.92L3.52 12.25L1.75 10.48L3.08 9.41L2.52 8.06L0.83 8.25L0.83 5.75L2.52 5.94L3.08 4.59L1.75 3.52L3.52 1.75L4.59 3.08L5.94 2.52L5.75 0.83L8.25 0.83L8.06 2.52L9.41 3.08L10.48 1.75L12.25 3.52L10.92 4.59L11.48 5.94Z" fill="none" stroke="#d8d8d8" stroke-width="1"/><circle cx="7" cy="7" r="2.1" fill="none" stroke="#d8d8d8"/></svg>
<div style="position:absolute;left:381px;top:852px;width:1px;height:18px;background:#444;"></div>
<div style="position:absolute;left:389.3px;top:854.0px;line-height:16px;color:#e6e6e6;white-space:pre;letter-spacing:-0.019px;">Default project:</div>
<div style="position:absolute;left:476px;top:851px;width:270.5px;height:20.5px;background:#383838;border:1px solid #454545;box-sizing:border-box;"></div>
<div style="position:absolute;left:480.0px;top:854.0px;line-height:16px;color:#fafafa;white-space:pre;letter-spacing:-0.185px;">Backend\ProductService.ClearAPI</div>
<svg style="position:absolute;left:735.7px;top:860.25px;" width="6" height="3.5" viewBox="0 0 6 3.5"><path d="M0 0H6L3.0 3.5Z" fill="#d0d0d0"/></svg>
<div style="position:absolute;left:752.5px;top:852px;width:1px;height:18px;background:#444;"></div>
<svg style="position:absolute;left:761px;top:854px;" width="15" height="14" viewBox="0 0 15 14"><path d="M6 1.5H14.5M6 4.5H14.5M0.5 7.5H14.5M0.5 10.5H14.5M0.5 13.2H14.5" stroke="#e6e6e6" stroke-width="1.1"/><path d="M0.6 0.6L4.2 4.4M4.2 0.6L0.6 4.4" stroke="#e5484d" stroke-width="1.2"/></svg>
<div style="position:absolute;left:785px;top:856.5px;width:10px;height:10px;background:#3a3a3a;"></div>
<div style="position:absolute;left:75px;top:873.5px;width:1795px;height:46px;background:#252525;"></div>
<div style="position:absolute;left:95.0px;top:873.7px;line-height:15px;font-size:11.62px;font-family:'DejaVu Sans Mono','Liberation Mono',monospace;color:#f0f0f0;white-space:pre;">Executing nuget actions took 5.1 sec</div>
<div style="position:absolute;left:95.0px;top:888.7px;line-height:15px;font-size:11.62px;font-family:'DejaVu Sans Mono','Liberation Mono',monospace;color:#f0f0f0;white-space:pre;">Time Elapsed: 00:00:05.2369148</div>
<div style="position:absolute;left:123px;top:903.5px;width:448.3px;height:15.5px;background:#565656;"></div>
<div style="position:absolute;left:95.0px;top:903.7px;line-height:15px;font-size:11.62px;font-family:'DejaVu Sans Mono','Liberation Mono',monospace;color:#f0f0f0;white-space:pre;">PM&gt; Install-Package Microsoft.jQuery.Unobtrusive.Ajax -Version 3.2.6</div>
<div style="position:absolute;left:1870px;top:873.5px;width:17px;height:46px;background:#2b2b2b;"></div>
<svg style="position:absolute;left:1874.0px;top:880.75px;" width="9" height="4.5" viewBox="0 0 9 4.5"><path d="M0 4.5H9L4.5 0Z" fill="#9a9a9a"/></svg>
<svg style="position:absolute;left:1874.0px;top:907.75px;" width="9" height="4.5" viewBox="0 0 9 4.5"><path d="M0 0H9L4.5 4.5Z" fill="#9a9a9a"/></svg>
<div style="position:absolute;left:1874px;top:896px;width:9px;height:6px;background:#4d4d4d;"></div>
<div style="position:absolute;left:1869px;top:899px;width:18px;height:1.5px;background:#e6e6e6;"></div>
<div style="position:absolute;left:75px;top:919.5px;width:1795px;height:15.5px;background:#2e2e2e;"></div>
<div style="position:absolute;left:75px;top:919.5px;width:59px;height:15.5px;background:#333;"></div>
<div style="position:absolute;left:77.5px;top:919.8px;line-height:15px;font-size:11px;color:#f0f0f0;white-space:pre;letter-spacing:-0.338px;">100 %</div>
<svg style="position:absolute;left:125.69999999999999px;top:926.25px;" width="6" height="3.5" viewBox="0 0 6 3.5"><path d="M0 0H6L3.0 3.5Z" fill="#d0d0d0"/></svg>
<svg style="position:absolute;left:141.3px;top:923.3px;" width="5" height="8" viewBox="0 0 5 8"><path d="M5 0V8L0 4.0Z" fill="#9a9a9a"/></svg>
<svg style="position:absolute;left:1857.5px;top:923.3px;" width="5" height="8" viewBox="0 0 5 8"><path d="M0 0V8L5 4.0Z" fill="#9a9a9a"/></svg>
<div style="position:absolute;left:75px;top:935px;width:1812px;height:1px;background:#3f3f3f;"></div>
<div style="position:absolute;left:74.5px;top:935px;width:151.5px;height:19.5px;background:#1f1f1f;border:1px solid #3f3f3f;box-sizing:border-box;border-top:none;"></div>
<div style="position:absolute;left:80.2px;top:936.2px;line-height:16px;color:#fafafa;white-space:pre;letter-spacing:-0.241px;">Package Manager Console</div>
<div style="position:absolute;left:232.2px;top:936.2px;line-height:16px;color:#b4b4b4;white-space:pre;letter-spacing:-0.266px;">Developer PowerShell</div>
<div style="position:absolute;left:358.3px;top:936.2px;line-height:16px;color:#b4b4b4;white-space:pre;letter-spacing:-0.297px;">Error List</div>
<div style="position:absolute;left:416.4px;top:936.2px;line-height:16px;color:#b4b4b4;white-space:pre;letter-spacing:0.297px;">Output</div>
<div style="position:absolute;left:43px;top:961px;width:1877px;height:24px;background:#424242;"></div>
<svg style="position:absolute;left:47.5px;top:965.5px;" width="16" height="15" viewBox="0 0 16 15"><path d="M1.2 0.6H14.8V10.6H7.2L3.6 13.8V10.6H1.2Z" fill="none" stroke="#e0e0e0" stroke-width="1.1"/></svg>
<div style="position:absolute;left:71.3px;top:965.0px;line-height:16px;color:#fafafa;white-space:pre;letter-spacing:-0.597px;">Ready</div>
<svg style="position:absolute;left:1529.5px;top:965px;" width="10" height="16" viewBox="0 0 10 16"><circle cx="5" cy="8" r="3" fill="none" stroke="#e6e6e6" stroke-width="1.2"/><path d="M5 0.5V5M5 11V15.5" stroke="#e6e6e6" stroke-width="1.2"/></svg>
<div style="position:absolute;left:1548.6px;top:965.0px;line-height:16px;color:#fafafa;white-space:pre;letter-spacing:-0.323px;">49</div>
<svg style="position:absolute;left:1567.2px;top:971.0px;" width="7" height="4" viewBox="0 0 7 4"><path d="M0 4H7L3.5 0Z" fill="#f0f0f0"/></svg>
<svg style="position:absolute;left:1599px;top:966.5px;" width="12" height="12" viewBox="0 0 12 12"><path d="M1 11L1.8 8L8.6 1.2A1.3 1.3 0 0 1 10.8 3.4L4 10.2Z" fill="none" stroke="#e6e6e6" stroke-width="1.1"/></svg>
<div style="position:absolute;left:1618.8px;top:965.0px;line-height:16px;color:#fafafa;white-space:pre;letter-spacing:-0.423px;">40</div>
<svg style="position:absolute;left:1654.5px;top:965px;" width="12" height="16" viewBox="0 0 12 16"><circle cx="3" cy="3" r="1.9" fill="none" stroke="#e6e6e6" stroke-width="1.1"/><circle cx="3" cy="13" r="1.9" fill="none" stroke="#e6e6e6" stroke-width="1.1"/><circle cx="9.4" cy="4.6" r="1.9" fill="none" stroke="#e6e6e6" stroke-width="1.1"/><path d="M3 5V11M9.4 6.6C9.4 9 5 8.4 3.2 10.8" fill="none" stroke="#e6e6e6" stroke-width="1.1"/></svg>
<div style="position:absolute;left:1675.5px;top:965.0px;line-height:16px;color:#fafafa;white-space:pre;letter-spacing:-0.195px;">master</div>
<svg style="position:absolute;left:1717.5px;top:971.0px;" width="7" height="4" viewBox="0 0 7 4"><path d="M0 4H7L3.5 0Z" fill="#f0f0f0"/></svg>
<svg style="position:absolute;left:1754px;top:966px;" width="14" height="14" viewBox="0 0 14 14"><path d="M0.6 0.6H13.4V3.6H0.6Z M1.8 3.6V13.4H12.2V3.6" fill="none" stroke="#e6e6e6" stroke-width="1.1"/><path d="M5 6V10.4L7 9L9 10.4V6" fill="none" stroke="#e6e6e6" stroke-width="1"/></svg>
<div style="position:absolute;left:1775.2px;top:965.0px;line-height:16px;color:#fafafa;white-space:pre;letter-spacing:-0.233px;">ProductService</div>
<svg style="position:absolute;left:1860.3px;top:971.0px;" width="7" height="4" viewBox="0 0 7 4"><path d="M0 4H7L3.5 0Z" fill="#f0f0f0"/></svg>
<svg style="position:absolute;left:1891px;top:965px;" width="14" height="16" viewBox="0 0 14 16"><path d="M2 11.4V7A5 5 0 0 1 12 7V11.4L13.2 12.6H0.8Z" fill="none" stroke="#e6e6e6" stroke-width="1.2"/><path d="M5.4 14.2A1.7 1.7 0 0 0 8.6 14.2" fill="none" stroke="#e6e6e6" stroke-width="1.1"/></svg>
<div style="position:absolute;left:43px;top:985px;width:1877px;height:48.3px;background:#c3eef0;"></div>
<div style="position:absolute;left:43px;top:1033px;width:1877px;height:2px;background:#0a0a0a;"></div>
<div style="position:absolute;left:1918.5px;top:985px;width:1.5px;height:50px;background:#0a0a0a;"></div>
<div style="position:absolute;left:43px;top:985px;width:1876px;height:1px;background:#c9d3d6;"></div>
<svg style="position:absolute;left:63.5px;top:997.3px;" width="24" height="24" viewBox="0 0 24 24"><defs><linearGradient id="wg" x1="0" y1="0" x2="1" y2="1"><stop offset="0" stop-color="#5cc8f8"/><stop offset="1" stop-color="#0a6fd8"/></linearGradient></defs><path d="M0.5 0.5H11.3V11.3H0.5ZM12.7 0.5H23.5V11.3H12.7ZM0.5 12.7H11.3V23.5H0.5ZM12.7 12.7H23.5V23.5H12.7Z" fill="url(#wg)"/></svg>
<svg style="position:absolute;left:108.0px;top:997.3px;" width="24" height="24" viewBox="0 0 24 24"><rect x="7" y="1" width="16.5" height="15" rx="2" fill="#f4f4f4" stroke="#c8d4d6" stroke-width="0.6"/><rect x="0.5" y="8" width="17" height="15" rx="2" fill="#2a2a2a"/><path d="M7 8H17.5V16H7Z" fill="#bdbdbd"/></svg>
<svg style="position:absolute;left:152.0px;top:997.3px;" width="24" height="24" viewBox="0 0 24 24"><rect x="0.5" y="2.5" width="23" height="18" rx="1.5" fill="#1f7fd6"/><path d="M1.5 19.5V11L4.5 7L7.5 13L10.5 8L13.5 12L17 6L19.5 10L22.5 7.5V19.5Z" fill="#9fd6f5"/><path d="M1.5 11L4.5 7L7.5 13L10.5 8L13.5 12L17 6L19.5 10L22.5 7.5" fill="none" stroke="#e8f6ff" stroke-width="1.4"/></svg>
<div style="position:absolute;left:161px;top:1025.2px;width:6px;height:2.6px;background:#75807f;border-radius:1.3px;"></div>
<svg style="position:absolute;left:195.5px;top:997.3px;" width="24" height="24" viewBox="0 0 24 24"><rect x="1" y="1" width="19" height="19" rx="1.5" fill="#1c86e0"/><circle cx="10.4" cy="10" r="5.6" fill="#8fd0f8" stroke="#e8f6ff" stroke-width="1.6"/><path d="M14.6 14.4L21.5 21.5" stroke="#1a6fc4" stroke-width="2.6"/></svg>
<svg style="position:absolute;left:240.0px;top:997.3px;" width="24" height="24" viewBox="0 0 24 24"><path d="M12 0.8C8.6 3 4.6 3.8 1.2 3.8V11C1.2 17 5.6 21.2 12 23.4C18.4 21.2 22.8 17 22.8 11V3.8C19.4 3.8 15.4 3 12 0.8Z" fill="#1a7fd8"/><path d="M12 0.8V23.4C5.6 21.2 1.2 17 1.2 11V3.8C4.6 3.8 8.6 3 12 0.8Z" fill="#3ba4ee"/><path d="M12 11.5H22.8C22.6 17.2 18.2 21.2 12 23.4Z" fill="#0f5aa8"/><path d="M1.2 11.5H12V0.8C8.6 3 4.6 3.8 1.2 3.8Z" fill="#55bdf5"/></svg>
<svg style="position:absolute;left:284.0px;top:997.3px;" width="24" height="24" viewBox="0 0 24 24"><path d="M23.90 10.44L23.90 13.56L21.87 13.61L21.35 15.54L23.08 16.60L21.53 19.30L19.74 18.33L18.33 19.74L19.30 21.53L16.60 23.08L15.54 21.35L13.61 21.87L13.56 23.90L10.44 23.90L10.39 21.87L8.46 21.35L7.40 23.08L4.70 21.53L5.67 19.74L4.26 18.33L2.47 19.30L0.92 16.60L2.65 15.54L2.13 13.61L0.10 13.56L0.10 10.44L2.13 10.39L2.65 8.46L0.92 7.40L2.47 4.70L4.26 5.67L5.67 4.26L4.70 2.47L7.40 0.92L8.46 2.65L10.39 2.13L10.44 0.10L13.56 0.10L13.61 2.13L15.54 2.65L16.60 0.92L19.30 2.47L18.33 4.26L19.74 5.67L21.53 4.70L23.08 7.40L21.35 8.46L21.87 10.39Z" fill="#b30000"/><rect x="5.4" y="5.4" width="13.2" height="13.2" fill="#c41010"/><path d="M7.6 17V7.4H12.4M7.6 12H11.2M12.4 10.4H17L12.4 17H17.2" fill="none" stroke="#fff" stroke-width="1.7"/></svg>
<div style="position:absolute;left:293px;top:1025.2px;width:6px;height:2.6px;background:#75807f;border-radius:1.3px;"></div>
<svg style="position:absolute;left:328.0px;top:997.3px;" width="24" height="24" viewBox="0 0 24 24"><rect x="0.5" y="2.5" width="23" height="19" rx="2" fill="#2b2b2b"/><rect x="0.5" y="2.5" width="23" height="4" rx="2" fill="#5a5a5a"/><path d="M3.6 9.6L8 13L3.6 16.4" fill="none" stroke="#fff" stroke-width="1.7"/><path d="M9.6 17H15.6" stroke="#fff" stroke-width="1.7"/></svg>
<div style="position:absolute;left:337px;top:1025.2px;width:6px;height:2.6px;background:#75807f;border-radius:1.3px;"></div>
<svg style="position:absolute;left:372.0px;top:997.3px;" width="24" height="24" viewBox="0 0 24 24"><path d="M1 3.4A1.6 1.6 0 0 1 2.6 1.8H8.8L11 4.4H21.4A1.6 1.6 0 0 1 23 6V8H1Z" fill="#e8a825"/><rect x="1" y="5.6" width="22" height="16" rx="1.6" fill="#fad45a"/><path d="M1 18H23V20A1.6 1.6 0 0 1 21.4 21.6H2.6A1.6 1.6 0 0 1 1 20Z" fill="#f0b834"/><path d="M6 21.6V17A1.4 1.4 0 0 1 7.4 15.6H16.6A1.4 1.4 0 0 1 18 17V21.6Z" fill="#1e7fe0"/><rect x="8.4" y="18" width="7.2" height="1.4" fill="#0f5cb4"/></svg>
<div style="position:absolute;left:381px;top:1025.2px;width:6px;height:2.6px;background:#75807f;border-radius:1.3px;"></div>
<svg style="position:absolute;left:416.0px;top:997.3px;" width="24" height="24" viewBox="0 0 24 24"><defs><radialGradient id="fx" cx="0.65" cy="0.2" r="0.9"><stop offset="0" stop-color="#ffe14a"/><stop offset="0.45" stop-color="#ff8a1f"/><stop offset="1" stop-color="#e5264e"/></radialGradient></defs><circle cx="12" cy="13" r="10.4" fill="url(#fx)"/><path d="M14 0.5C15.6 3 19.5 4.6 21.6 9.4C19.6 7 18 7.2 16.6 5C15.2 4 14.2 2.4 14 0.5Z" fill="#ffc22e"/><circle cx="12.6" cy="12.4" r="5.2" fill="#7a3fe0"/><path d="M7.2 10.4C9 8.6 12 8.4 14 9.8C12 9.8 10.8 11 11.4 12.6C12 14.2 14.4 14.6 16 13.4C15.6 16.4 12.6 18 10 17.2C7.4 16.4 6 13.2 7.2 10.4Z" fill="#ff9a2a"/></svg>
<svg style="position:absolute;left:460.0px;top:997.3px;" width="24" height="24" viewBox="0 0 24 24"><rect x="3" y="2.6" width="18" height="19.4" rx="1" fill="#2a9be0"/><rect x="3" y="20" width="18" height="2.6" fill="#c97b4a"/><path d="M6.4 0.6V4.6M10.2 0.6V4.6M13.8 0.6V4.6M17.6 0.6V4.6" stroke="#23648f" stroke-width="1.7"/><path d="M6 8.4H18M6 11.4H18M6 14.4H18M6 17.4H18" stroke="#bfe6fa" stroke-width="1.6"/></svg>
<svg style="position:absolute;left:504.0px;top:997.3px;" width="24" height="24" viewBox="0 0 24 24"><path d="M3 1H17L21 5V23H3Z" fill="#f2f2ea" stroke="#8a8a8a" stroke-width="0.8"/><path d="M3 14H21V23H3Z" fill="#7fcf4a"/><path d="M6 4.6V14M6 7H15M10 8.6V11M13 8.6V11" stroke="#4a4a4a" stroke-width="1.2" fill="none"/><path d="M21.4 0.8L23.2 2.4L13.2 16.4L10.8 17.4L11.2 14.8Z" fill="#e8b030" stroke="#9a6a10" stroke-width="0.6"/><path d="M21.4 0.8L23.2 2.4L22 4L20.2 2.4Z" fill="#d43a3a"/></svg>
<div style="position:absolute;left:513px;top:1025.2px;width:6px;height:2.6px;background:#75807f;border-radius:1.3px;"></div>
<svg style="position:absolute;left:548.3px;top:997.3px;" width="24" height="24" viewBox="0 0 24 24"><path d="M0.8 12C4 6 9 4.6 12 4.6C15 4.6 20 6 23.2 12C20 18 15 19.4 12 19.4C9 19.4 4 18 0.8 12Z" fill="#fff4d0" stroke="#e8860a" stroke-width="2.2"/><circle cx="12" cy="12" r="5" fill="#d8352a"/><path d="M12 9.4A2.6 2.6 0 1 0 14.6 12A1.6 1.6 0 1 1 12 10.6" fill="none" stroke="#ffe9b0" stroke-width="0.9"/><circle cx="4.4" cy="3.4" r="1.5" fill="#e8860a"/><circle cx="12" cy="1.6" r="1.5" fill="#e8860a"/><circle cx="19.6" cy="3.4" r="1.5" fill="#e8860a"/></svg>
<svg style="position:absolute;left:591.7px;top:997.3px;" width="24" height="24" viewBox="0 0 24 24"><path d="M1 7.4C3 6.4 5.4 7 7 8.4C10 7 13 7 15.4 8C17 4.6 20.4 2.4 23 2.6C22.4 6.4 21.4 10.4 19 14C17.4 18 13.4 20.4 9.4 19.4C5.4 18.6 3 15 3.4 11.4C2 10.4 1 9 1 7.4Z" fill="#7b736a"/><circle cx="7.6" cy="10.6" r="2.9" fill="#fff"/><circle cx="13.6" cy="10.8" r="2.9" fill="#fff"/><circle cx="8" cy="10.8" r="1.4" fill="#111"/><circle cx="13.2" cy="11" r="1.4" fill="#111"/><path d="M8.6 15.4C10 16.8 12.4 16.8 14 15.6" fill="none" stroke="#111" stroke-width="1.1"/><path d="M13.6 16.4L21.4 21L22.6 23L20.4 22.4Z" fill="#c89a50" stroke="#3a2a10" stroke-width="0.5"/><ellipse cx="10.6" cy="13.6" rx="1.6" ry="1.1" fill="#111"/></svg>
<svg style="position:absolute;left:635.8px;top:997.3px;" width="24" height="24" viewBox="0 0 24 24"><path d="M3 1.6A1.4 1.4 0 0 1 4.4 0.2H15L21.6 6.8V22.4A1.4 1.4 0 0 1 20.2 23.8H4.4A1.4 1.4 0 0 1 3 22.4Z" fill="#f2f2f2" stroke="#555" stroke-width="1.5"/><path d="M15 0.2L21.6 6.8H16.4A1.4 1.4 0 0 1 15 5.4Z" fill="#6a6a6a"/><path d="M3 19.4H21.6V22.4A1.4 1.4 0 0 1 20.2 23.8H4.4A1.4 1.4 0 0 1 3 22.4Z" fill="#7a7a7a"/></svg>
<div style="position:absolute;left:672.7px;top:990px;width:38px;height:38.3px;background:#e2f5f7;border:1px solid #f2fbfc;box-sizing:border-box;border-radius:4px;"></div>
<div style="position:absolute;left:684.4px;top:1025.6px;width:15px;height:2.6px;background:#1671d8;border-radius:1.3px;"></div>
<svg style="position:absolute;left:679.7px;top:997.3px;" width="24" height="24" viewBox="0 0 24 24"><path d="M17 0.6L23.4 3.4V20.6L17 23.4L6.4 13.8L2.6 16.8L0.6 15.8V8.2L2.6 7.2L6.4 10.2Z M17.2 7.4L11.2 12L17.2 16.6Z M3 9.8V14.2L5.2 12Z" fill="#8a52d8" fill-rule="evenodd"/><path d="M17 0.6L23.4 3.4V20.6L17 23.4Z" fill="#c090f0"/><path d="M17 0.6L6.4 10.2L2.6 7.2L0.6 8.2L11.2 12L17.2 7.4Z" fill="#a36de6" opacity="0.9"/></svg>
<svg style="position:absolute;left:723.6px;top:997.3px;" width="24" height="24" viewBox="0 0 24 24"><path d="M17.4 0.8L23.2 3.6V20.4L17.4 23.2L7.2 14L3 17.2L0.8 16V8L3 6.8L7.2 10Z M17.4 7.2L11.4 12L17.4 16.8Z" fill="#1f8ad2" fill-rule="evenodd"/><path d="M17.4 0.8L23.2 3.6V20.4L17.4 23.2Z" fill="#2ea3ee"/><path d="M0.8 8L3 6.8L17.4 23.2L7.2 14L3 17.2L0.8 16L5 12Z" fill="#0e6bb4"/></svg>
<svg style="position:absolute;left:767.7px;top:997.3px;" width="24" height="24" viewBox="0 0 24 24"><path d="M12 0.6L17.4 6L12 11.4L6.6 6Z" fill="#e86a6a"/><path d="M18 6.6L23.4 12L18 17.4L12.6 12Z" fill="#7fce5a"/><path d="M6 6.6L11.4 12L6 17.4L0.6 12Z" fill="#7fb0ee"/><path d="M12 12.6L17.4 18L12 23.4L6.6 18Z" fill="#f2dc6a"/><path d="M11 2.4L10 8.4M14.6 8.4C16.6 8.6 16.8 10.6 15.4 11.6" fill="none" stroke="#fff" stroke-width="1.4"/><circle cx="15.4" cy="12.6" r="1.6" fill="#fff"/></svg>
<svg style="position:absolute;left:811.6px;top:997.3px;" width="24" height="24" viewBox="0 0 24 24"><circle cx="12" cy="12" r="11.6" fill="#fbc116"/><path d="M12 0.4A11.6 11.6 0 0 1 22.05 6.2H12A5.8 5.8 0 0 0 6.98 9.1L1.95 6.2A11.6 11.6 0 0 1 12 0.4Z" fill="#e33b2e"/><path d="M1.95 6.2L6.98 14.9A5.8 5.8 0 0 0 12 17.8L7 23.05A11.6 11.6 0 0 1 1.95 6.2Z" fill="#2da94f"/><path d="M1.95 6.2L6.98 14.9A5.8 5.8 0 0 0 14.9 17.02L9.9 23.4A11.6 11.6 0 0 1 1.95 6.2Z" fill="#2da94f"/><circle cx="12" cy="12" r="5.3" fill="#fff"/><circle cx="12" cy="12" r="4.2" fill="#3b7ff0"/></svg>
<svg style="position:absolute;left:855.7px;top:997.3px;" width="24" height="24" viewBox="0 0 24 24"><path d="M0.8 0.8H8.4L6 3.2L10.4 7.6L7.6 10.4L3.2 6L0.8 8.4Z" fill="#2aa0ea" stroke="#1070b8" stroke-width="0.6"/><path d="M23.2 23.2H15.6L18 20.8L13.6 16.4L16.4 13.6L20.8 18L23.2 15.6Z" fill="#58c83a" stroke="#2a8a18" stroke-width="0.6"/><rect x="6.6" y="10" width="11.4" height="9.4" rx="1" fill="#b8bcc0" stroke="#555" stroke-width="0.8"/><path d="M8.8 10V7.4A3.5 3.5 0 0 1 15.8 7.4V10" fill="none" stroke="#6a6e72" stroke-width="1.8"/><rect x="6.6" y="14.4" width="11.4" height="5" fill="#8a8e92"/></svg>
<svg style="position:absolute;left:899.6px;top:997.3px;" width="24" height="24" viewBox="0 0 24 24"><ellipse cx="12" cy="17" rx="9.6" ry="6.4" fill="#f2b40f"/><ellipse cx="11" cy="16" rx="7.4" ry="4.6" fill="#fbd02c"/><circle cx="13" cy="7" r="5.6" fill="#fbd02c"/><path d="M16.8 6.4L21.4 8L17.2 9.8Z" fill="#f07a1a"/><circle cx="14.6" cy="5.6" r="0.9" fill="#3a2a08"/><path d="M8 5A5.6 5.6 0 0 1 13 1.4" fill="none" stroke="#fde88a" stroke-width="1.4"/></svg>
<svg style="position:absolute;left:943.8px;top:997.3px;" width="24" height="24" viewBox="0 0 24 24"><circle cx="8.6" cy="8.6" r="8" fill="#2a8be0"/><path d="M3 5C5 3.4 7.6 4.4 8 6.4C8.4 8.4 6 9 5 11C4.4 12.4 2.4 11.4 1.2 9.4ZM10 12C12 11 14.6 12 14 14.4C13.4 15.8 11 16 9.6 15Z" fill="#5cc84a"/><path d="M1 5C5 1 11 0.6 15.4 4" fill="none" stroke="#f2b020" stroke-width="2"/><rect x="12" y="7" width="9.4" height="16.6" rx="0.8" fill="#c8ccd0" stroke="#6a6e72" stroke-width="0.7"/><rect x="18" y="7" width="3.4" height="16.6" fill="#8a8e92"/><path d="M13.4 9.6H17M13.4 12H17M13.4 14.4H17" stroke="#4a4e52" stroke-width="1"/><circle cx="14.4" cy="20.6" r="1" fill="#3ad03a"/></svg>
<div style="position:absolute;left:952.8px;top:1025.2px;width:6px;height:2.6px;background:#75807f;border-radius:1.3px;"></div>
<svg style="position:absolute;left:987.6px;top:997.3px;" width="24" height="24" viewBox="0 0 24 24"><path d="M4.4 2.4C8 -0.2 13 0.4 15.4 1.8C18.6 0.6 22.4 2.4 22.6 7C22.8 10.6 20.6 14.6 18.8 16.2C18.6 18.6 17.8 20.2 16.2 20.4C15.8 22.6 14.4 23.6 12.6 23.4C10.6 23.2 9.8 21.6 9.8 19.4V16.4C7.8 16.8 6 16 5.4 14.8C2.4 13.6 0.6 9.6 1.4 6.4C1.8 4.6 3 3.2 4.4 2.4Z" fill="#336791"/><path d="M9.8 6.4C9 9 9.4 12.4 9.8 16.4M15.4 1.8C17 4.4 17 8.4 15.6 11.4C15 13 16 14.6 18.8 16.2" fill="none" stroke="#fff" stroke-width="0.9"/><circle cx="7.6" cy="6.6" r="0.9" fill="#fff"/><circle cx="17.6" cy="6" r="0.9" fill="#fff"/></svg>
<svg style="position:absolute;left:1031.8px;top:997.3px;" width="24" height="24" viewBox="0 0 24 24"><rect x="0.6" y="0.6" width="22.8" height="22.8" rx="2.4" fill="#1e4f7a" stroke="#0f3558" stroke-width="0.8"/><path d="M3.4 5C6 4 8.6 5.4 10.4 7.6C12.6 7.6 15.4 9.4 16.8 12C18 14.4 19 16.4 20.8 17.6C19 17.6 17.6 17 16.6 16C16.4 17.6 17 19 18 20C15.6 19.4 14 17.6 13.4 15.4C11.6 15.6 10 14.6 9 13C7.6 11 7.6 8.6 6.4 7C5.6 6 4.4 5.6 3.4 5Z" fill="none" stroke="#d8e8f4" stroke-width="1"/><path d="M16.4 3.2L20.6 7.4M18.8 2.6L21.2 5" stroke="#d8e8f4" stroke-width="1.1"/></svg>
<svg style="position:absolute;left:1741.4px;top:1005.4px;" width="11.4" height="7" viewBox="0 0 11.4 7"><path d="M0.9 6.2L5.7 1.2L10.5 6.2" fill="none" stroke="#1a1a1a" stroke-width="1.5"/></svg>
<svg style="position:absolute;left:1771px;top:1003px;" width="16" height="12" viewBox="0 0 16 12"><path d="M0.7 4A10.2 10.2 0 0 1 15.3 4M3 6.6A7 7 0 0 1 13 6.6M5.3 9A3.8 3.8 0 0 1 10.7 9" fill="none" stroke="#1a1a1a" stroke-width="1.25"/><circle cx="8" cy="10.6" r="1.1" fill="#1a1a1a"/></svg>
<svg style="position:absolute;left:1796.5px;top:1003px;" width="16" height="16" viewBox="0 0 16 16"><path d="M0.8 3.8H3.2L7 0.8V6.4M0.8 3.8V8H3.2L5 9.6" fill="none" stroke="#1a1a1a" stroke-width="1.2"/><circle cx="10" cy="10" r="4.5" fill="#1a1a1a"/><path d="M8.2 8.2L11.8 11.8M11.8 8.2L8.2 11.8" stroke="#c3eef0" stroke-width="1.2"/></svg>
<svg style="position:absolute;left:1818.5px;top:1001px;" width="18" height="14" viewBox="0 0 18 14"><rect x="1.2" y="3.6" width="13.6" height="8.8" rx="1.6" fill="none" stroke="#1a1a1a" stroke-width="1.2"/><path d="M3 10.8L4.6 5.2H13.2V10.8Z" fill="#1a1a1a"/><rect x="15.2" y="6.4" width="1.5" height="3.2" rx="0.6" fill="#1a1a1a"/><rect x="0" y="2.4" width="5.6" height="3.4" fill="#c3eef0"/><path d="M5 0L1.2 5H3.2L2.2 8.4L6.2 3.4H4.2Z" fill="#1a1a1a"/></svg>
<div style="position:absolute;right:20.5px;top:993.2px;line-height:16px;color:#1a1a1a;white-space:pre;letter-spacing:-0.089px;">1:44 AM</div>
<div style="position:absolute;right:20.5px;top:1009.2px;line-height:16px;color:#1a1a1a;white-space:pre;letter-spacing:0.149px;">8/4/2025</div>
<div style="position:absolute;left:1601.0px;top:897.5px;line-height:24px;font-size:20px;color:rgba(190,190,190,0.62);white-space:pre;letter-spacing:-0.052px;">Activate Windows</div>
<div style="position:absolute;left:1601.0px;top:922.5px;line-height:18px;font-size:15px;color:rgba(190,190,190,0.62);white-space:pre;letter-spacing:-0.022px;">Go to Settings to activate Windows.</div>
<!-- p6_dialog -->
<div style="position:absolute;left:760px;top:352.7px;width:584px;height:357.3px;background:#fff;border-radius:7px;overflow:hidden;"><div style="position:absolute;left:0;top:0;width:100%;height:30.3px;background:#e4f7f7"></div></div>
<div style="position:absolute;left:769.2px;top:359.7px;line-height:16px;color:#000;white-space:pre;letter-spacing:-0.060px;">Add View</div>
<svg style="position:absolute;left:1323.2px;top:362px;" width="11" height="11" viewBox="0 0 11 11"><path d="M0.5 0.5L10.5 10.5M10.5 0.5L0.5 10.5" stroke="#1a1a1a" stroke-width="1.1"/></svg>
<div style="position:absolute;left:772.0px;top:403.0px;line-height:16px;color:#000;white-space:pre;letter-spacing:-0.198px;">View name:</div>
<div style="position:absolute;left:889px;top:400px;width:443px;height:21px;background:#fff;border:1px solid #abadb3;box-sizing:border-box;"></div>
<div style="position:absolute;left:894.2px;top:403.0px;line-height:16px;color:#000;white-space:pre;letter-spacing:-0.271px;">Index</div>
<div style="position:absolute;left:772.0px;top:433.8px;line-height:16px;color:#000;white-space:pre;letter-spacing:-0.036px;">Template:</div>
<div style="position:absolute;left:889px;top:431px;width:443px;height:21px;background:#fff;border:1px solid #abadb3;box-sizing:border-box;"></div>
<div style="position:absolute;left:894.2px;top:433.8px;line-height:16px;color:#000;white-space:pre;letter-spacing:0.125px;">Empty (without model)</div>
<svg style="position:absolute;left:1319.0px;top:439.3px;" width="7" height="4.6" viewBox="0 0 7 4.6"><path d="M0.6 0.6L3.5 3.6L6.4 0.6" fill="none" stroke="#333" stroke-width="1.15"/></svg>
<div style="position:absolute;left:772.0px;top:464.8px;line-height:16px;color:#a0a0a0;white-space:pre;letter-spacing:-0.174px;">Model class:</div>
<div style="position:absolute;left:889px;top:462px;width:443px;height:21px;background:#fff;border:1px solid #d4d4d4;box-sizing:border-box;"></div>
<svg style="position:absolute;left:1319.0px;top:470.3px;" width="7" height="4.6" viewBox="0 0 7 4.6"><path d="M0.6 0.6L3.5 3.6L6.4 0.6" fill="none" stroke="#bdbdbd" stroke-width="1.15"/></svg>
<div style="position:absolute;left:772.0px;top:495.8px;line-height:16px;color:#a0a0a0;white-space:pre;letter-spacing:-0.241px;">Data context class:</div>
<div style="position:absolute;left:889px;top:493px;width:443px;height:21px;background:#fff;border:1px solid #d4d4d4;box-sizing:border-box;"></div>
<svg style="position:absolute;left:1319.0px;top:501.3px;" width="7" height="4.6" viewBox="0 0 7 4.6"><path d="M0.6 0.6L3.5 3.6L6.4 0.6" fill="none" stroke="#bdbdbd" stroke-width="1.15"/></svg>
<div style="position:absolute;left:772.0px;top:523.6px;line-height:16px;color:#000;white-space:pre;letter-spacing:-0.011px;">Options:</div>
<div style="position:absolute;left:773px;top:550px;width:13px;height:13px;background:#fff;border:1px solid #333;box-sizing:border-box;"></div>
<div style="position:absolute;left:792.5px;top:548.0px;line-height:16px;color:#000;white-space:pre;letter-spacing:-0.249px;">Create as a partial view</div>
<div style="position:absolute;left:773px;top:574.7px;width:13px;height:13px;background:#e6e6e6;border:1px solid #bcbcbc;box-sizing:border-box;"></div>
<svg style="position:absolute;left:775px;top:577.5px;" width="9" height="8" viewBox="0 0 9 8"><path d="M0.8 4L3.2 6.6L8.2 0.8" fill="none" stroke="#b0b0b0" stroke-width="1.5"/></svg>
<div style="position:absolute;left:792.5px;top:572.6px;line-height:16px;color:#8a8a8a;white-space:pre;letter-spacing:-0.223px;">Reference script libraries</div>
<div style="position:absolute;left:773px;top:599.7px;width:13px;height:13px;background:#fff;border:1px solid #333;box-sizing:border-box;"></div>
<svg style="position:absolute;left:775px;top:602.5px;" width="9" height="8" viewBox="0 0 9 8"><path d="M0.8 4L3.2 6.6L8.2 0.8" fill="none" stroke="#111" stroke-width="1.6"/></svg>
<div style="position:absolute;left:792.5px;top:597.6px;line-height:16px;color:#000;white-space:pre;letter-spacing:-0.281px;">Use a layout page:</div>
<div style="position:absolute;left:792px;top:619.3px;width:503px;height:20.4px;background:#fff;border:1px solid #abadb3;box-sizing:border-box;"></div>
<div style="position:absolute;left:796.9px;top:622.0px;line-height:16px;color:#000;white-space:pre;letter-spacing:0.017px;">~/Views/Shared/_Layout.cshtml</div>
<div style="position:absolute;left:1305px;top:619.3px;width:27px;height:20.4px;background:#e1e1e1;border:1px solid #7c7c7c;box-sizing:border-box;"></div>
<div style="position:absolute;left:1314.3px;top:621.5px;line-height:16px;color:#000;white-space:pre;letter-spacing:-0.500px;">...</div>
<div style="position:absolute;left:792.5px;top:644.8px;line-height:16px;color:#000;white-space:pre;letter-spacing:-0.180px;">(Leave empty if it is set in a Razor _viewstart file)</div>
<div style="position:absolute;left:1170px;top:677px;width:75px;height:27px;background:#e1e1e1;border:1px solid #7c7c7c;box-sizing:border-box;"></div>
<div style="position:absolute;left:1196.2px;top:682.6px;line-height:16px;color:#000;white-space:pre;letter-spacing:0.050px;">Add</div>
<div style="position:absolute;left:1257px;top:677px;width:75px;height:27px;background:#e1e1e1;border:1px solid #7c7c7c;box-sizing:border-box;"></div>
<div style="position:absolute;left:1277.2px;top:682.6px;line-height:16px;color:#000;white-space:pre;letter-spacing:-0.242px;">Cancel</div>
<div style="position:absolute;left:1329px;top:529.4px;width:367.8px;height:24px;background:#f8f8fb;border:1px solid #767676;box-sizing:border-box;"></div>
<div style="position:absolute;left:1336.2px;top:533.9px;line-height:16px;color:#575757;white-space:pre;letter-spacing:-0.026px;">This feature is only available for views with a strongly-typed model.</div>
</div></body></html>
